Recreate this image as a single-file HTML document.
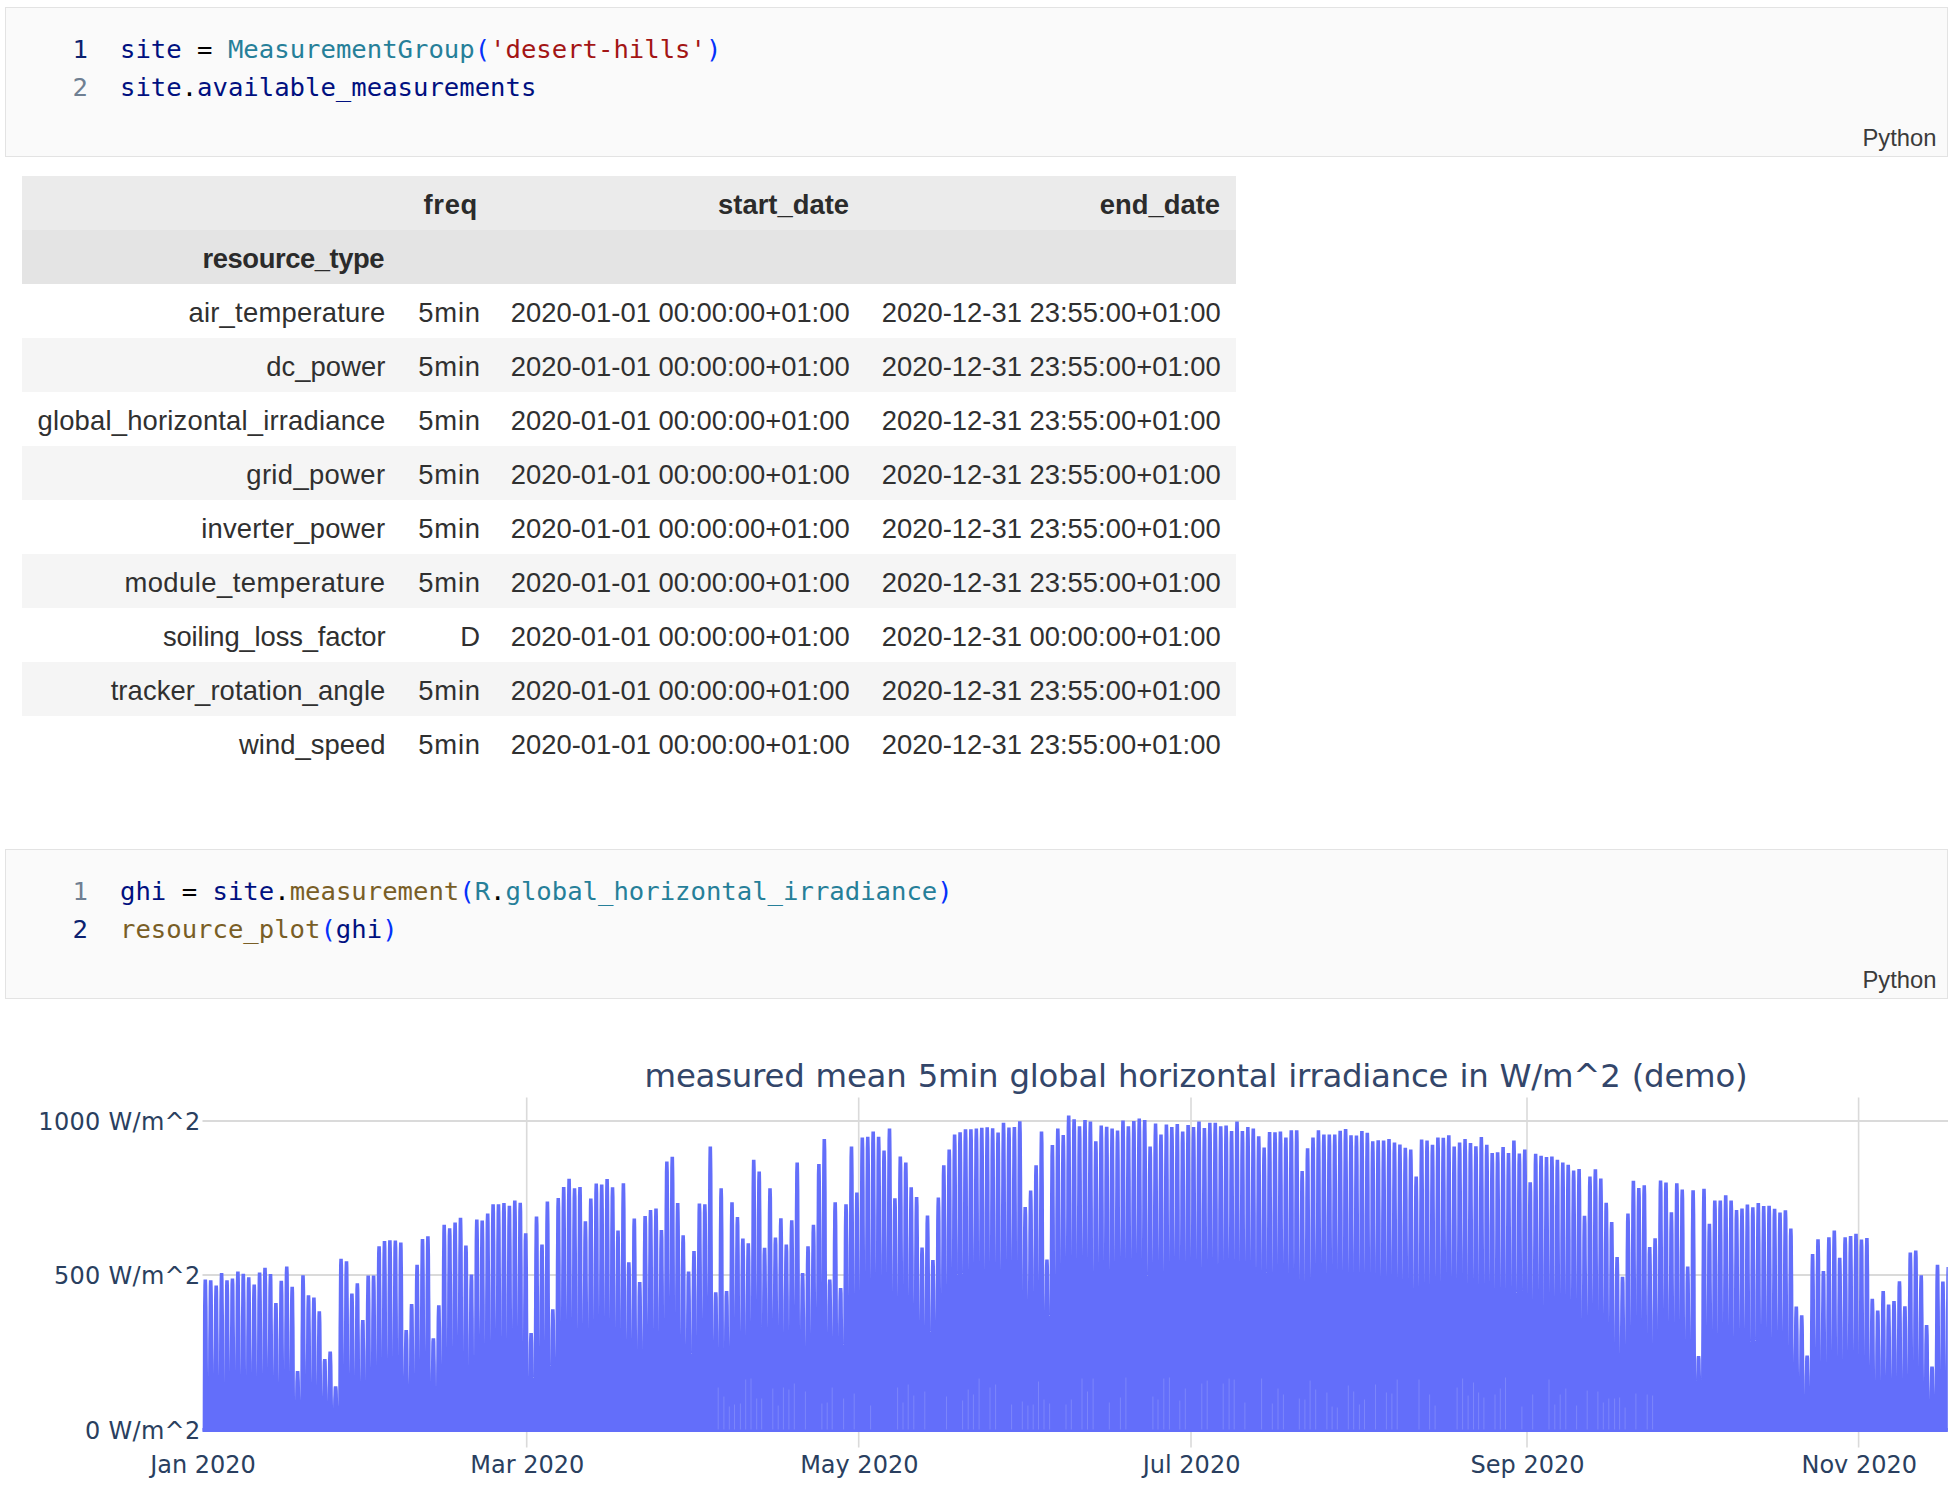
<!DOCTYPE html>
<html><head><meta charset="utf-8"><title>notebook</title>
<style>
html,body{margin:0;padding:0;background:#fff;}
body{width:1954px;height:1490px;position:relative;overflow:hidden;font-family:"Liberation Sans",sans-serif;}
.cell{position:absolute;left:5px;width:1941px;height:148px;background:#fafafa;border:1px solid #e3e3e3;}
.code{position:absolute;left:0;top:0;font-family:"DejaVu Sans Mono","Liberation Mono",monospace;font-size:25.62px;line-height:38px;white-space:pre;}
.ln{position:absolute;left:62px;width:20px;text-align:right;color:#6f7f92;}
.ln.act{color:#0b216f;}
.cl{position:absolute;left:114px;}
.v{color:#001080}.c{color:#267f99}.s{color:#a31515}.f{color:#795e26}.b{color:#0431fa}.k{color:#000}
.lang{position:absolute;right:10.5px;bottom:4px;font-size:23.8px;color:#3b3b3b;}
table{position:absolute;left:22px;top:176px;border-collapse:collapse;table-layout:fixed;width:1214px;font-size:27.4px;color:#303030;}
td,th{height:50px;padding:4px 16px 0 0;text-align:right;vertical-align:middle;white-space:nowrap;font-weight:normal;}
thead th{font-weight:bold;color:#2b2b2b}
th.rt{letter-spacing:-0.45px}th.fq{letter-spacing:0.7px}
tbody td:nth-child(1){padding-right:14.6px}tbody td:nth-child(2){letter-spacing:0.8px;padding-right:13.2px}tbody td:nth-child(3),tbody td:nth-child(4){padding-right:15.3px}
thead tr.h1{background:#ebebeb}
thead tr.h2{background:#e4e4e4}
tbody tr:nth-child(even){background:#f5f5f5}
</style></head><body>
<div class="cell" style="top:7px">
 <div class="code">
  <span class="ln act" style="top:21.8px">1</span><span class="ln" style="top:59.8px">2</span>
  <span class="cl" style="top:21.8px"><span class="v">site</span><span class="k"> = </span><span class="c">MeasurementGroup</span><span class="b">(</span><span class="s">'desert-hills'</span><span class="b">)</span></span>
  <span class="cl" style="top:59.8px"><span class="v">site</span><span class="k">.</span><span class="v">available_measurements</span></span>
 </div>
 <div class="lang">Python</div>
</div>
<table>
<colgroup><col style="width:378px"><col style="width:94px"><col style="width:371px"><col style="width:371px"></colgroup>
<thead>
<tr class="h1"><th></th><th class="fq">freq</th><th>start_date</th><th>end_date</th></tr>
<tr class="h2"><th class="rt">resource_type</th><th></th><th></th><th></th></tr>
</thead>
<tbody>
<tr><td style="letter-spacing:0.24px">air_temperature</td><td>5min</td><td>2020-01-01 00:00:00+01:00</td><td>2020-12-31 23:55:00+01:00</td></tr>
<tr><td style="letter-spacing:0.04px">dc_power</td><td>5min</td><td>2020-01-01 00:00:00+01:00</td><td>2020-12-31 23:55:00+01:00</td></tr>
<tr><td style="letter-spacing:0.19px">global_horizontal_irradiance</td><td>5min</td><td>2020-01-01 00:00:00+01:00</td><td>2020-12-31 23:55:00+01:00</td></tr>
<tr><td style="letter-spacing:0.36px">grid_power</td><td>5min</td><td>2020-01-01 00:00:00+01:00</td><td>2020-12-31 23:55:00+01:00</td></tr>
<tr><td style="letter-spacing:0.22px">inverter_power</td><td>5min</td><td>2020-01-01 00:00:00+01:00</td><td>2020-12-31 23:55:00+01:00</td></tr>
<tr><td style="letter-spacing:0.46px">module_temperature</td><td>5min</td><td>2020-01-01 00:00:00+01:00</td><td>2020-12-31 23:55:00+01:00</td></tr>
<tr><td style="letter-spacing:-0.15px">soiling_loss_factor</td><td>D</td><td>2020-01-01 00:00:00+01:00</td><td>2020-12-31 00:00:00+01:00</td></tr>
<tr><td style="letter-spacing:0.10px">tracker_rotation_angle</td><td>5min</td><td>2020-01-01 00:00:00+01:00</td><td>2020-12-31 23:55:00+01:00</td></tr>
<tr><td style="letter-spacing:0.02px">wind_speed</td><td>5min</td><td>2020-01-01 00:00:00+01:00</td><td>2020-12-31 23:55:00+01:00</td></tr>
</tbody></table>
<div class="cell" style="top:849px">
 <div class="code">
  <span class="ln" style="top:21.8px">1</span><span class="ln act" style="top:59.8px">2</span>
  <span class="cl" style="top:21.8px"><span class="v">ghi</span><span class="k"> = </span><span class="v">site</span><span class="k">.</span><span class="f">measurement</span><span class="b">(</span><span class="c">R</span><span class="k">.</span><span class="c">global_horizontal_irradiance</span><span class="b">)</span></span>
  <span class="cl" style="top:59.8px"><span class="f">resource_plot</span><span class="b">(</span><span class="v">ghi</span><span class="b">)</span></span>
 </div>
 <div class="lang">Python</div>
</div>
<svg width="1954" height="1490" viewBox="0 0 1954 1490" style="position:absolute;left:0;top:0" font-family="'DejaVu Sans',Verdana,sans-serif" fill="#2a3f5f">
<defs><clipPath id="pc"><rect x="202.5" y="1098" width="1745.3" height="336"/></clipPath></defs>
<line x1="526.7" x2="526.7" y1="1097.5" y2="1447.5" stroke="#dadada" stroke-width="1.6"/>
<line x1="858.7" x2="858.7" y1="1097.5" y2="1447.5" stroke="#dadada" stroke-width="1.6"/>
<line x1="1191.0" x2="1191.0" y1="1097.5" y2="1447.5" stroke="#dadada" stroke-width="1.6"/>
<line x1="1527.0" x2="1527.0" y1="1097.5" y2="1447.5" stroke="#dadada" stroke-width="1.6"/>
<line x1="1858.6" x2="1858.6" y1="1097.5" y2="1447.5" stroke="#dadada" stroke-width="1.6"/>
<line x1="202.5" x2="1948" y1="1121.0" y2="1121.0" stroke="#dadada" stroke-width="1.8"/>
<line x1="202.5" x2="1948" y1="1275.0" y2="1275.0" stroke="#dadada" stroke-width="1.8"/>
<line x1="202.5" x2="1948" y1="1430.5" y2="1430.5" stroke="#dadada" stroke-width="1.8"/>
<g clip-path="url(#pc)" fill="#636efa"><rect x="200" y="1428.0" width="1750" height="4"/><path d="M202.3,1430.5L202.4,1407.9L202.5,1385.2L202.7,1362.6L202.8,1340.0L202.9,1321.9L203.0,1306.8L203.2,1294.7L203.3,1285.6L203.5,1279.6L207.1,1279.6L207.3,1285.6L207.4,1294.7L207.6,1306.8L207.7,1321.9L207.8,1340.0L207.9,1362.6L208.1,1385.2L208.2,1407.9L208.3,1430.5ZM207.7,1430.5L207.9,1408.0L208.0,1385.4L208.1,1362.9L208.2,1340.4L208.4,1322.4L208.5,1307.3L208.6,1295.3L208.7,1286.3L208.9,1280.3L212.5,1280.3L212.7,1286.3L212.9,1295.3L213.0,1307.3L213.1,1322.4L213.2,1340.4L213.4,1362.9L213.5,1385.4L213.6,1408.0L213.7,1430.5ZM213.2,1430.5L213.3,1408.7L213.4,1387.0L213.5,1365.2L213.7,1343.4L213.8,1326.0L213.9,1311.5L214.0,1299.9L214.2,1291.2L214.4,1285.4L218.0,1285.4L218.2,1291.2L218.3,1299.9L218.4,1311.5L218.5,1326.0L218.7,1343.4L218.8,1365.2L218.9,1387.0L219.0,1408.7L219.2,1430.5ZM218.6,1430.5L218.7,1406.9L218.8,1383.2L219.0,1359.6L219.1,1335.9L219.2,1317.0L219.3,1301.3L219.5,1288.7L219.6,1279.2L219.8,1272.9L223.4,1272.9L223.6,1279.2L223.7,1288.7L223.8,1301.3L224.0,1317.0L224.1,1335.9L224.2,1359.6L224.3,1383.2L224.5,1406.9L224.6,1430.5ZM224.0,1430.5L224.1,1408.0L224.3,1385.4L224.4,1362.9L224.5,1340.4L224.6,1322.4L224.8,1307.3L224.9,1295.3L225.0,1286.3L225.2,1280.3L228.8,1280.3L229.0,1286.3L229.2,1295.3L229.3,1307.3L229.4,1322.4L229.5,1340.4L229.7,1362.9L229.8,1385.4L229.9,1408.0L230.0,1430.5ZM229.5,1430.5L229.6,1407.7L229.7,1384.9L229.8,1362.1L229.9,1339.2L230.1,1321.0L230.2,1305.8L230.3,1293.6L230.4,1284.5L230.7,1278.4L234.2,1278.4L234.5,1284.5L234.6,1293.6L234.7,1305.8L234.8,1321.0L235.0,1339.2L235.1,1362.1L235.2,1384.9L235.3,1407.7L235.4,1430.5ZM234.9,1430.5L235.0,1406.7L235.1,1382.8L235.2,1359.0L235.4,1335.1L235.5,1316.0L235.6,1300.1L235.7,1287.4L235.9,1277.9L236.1,1271.5L239.7,1271.5L239.9,1277.9L240.0,1287.4L240.1,1300.1L240.3,1316.0L240.4,1335.1L240.5,1359.0L240.6,1382.8L240.8,1406.7L240.9,1430.5ZM240.3,1430.5L240.4,1407.0L240.5,1383.5L240.7,1360.0L240.8,1336.5L240.9,1317.7L241.1,1302.0L241.2,1289.5L241.3,1280.1L241.5,1273.8L245.1,1273.8L245.3,1280.1L245.4,1289.5L245.6,1302.0L245.7,1317.7L245.8,1336.5L245.9,1360.0L246.1,1383.5L246.2,1407.0L246.3,1430.5ZM245.7,1430.5L245.9,1407.5L246.0,1384.5L246.1,1361.6L246.2,1338.6L246.4,1320.2L246.5,1304.9L246.6,1292.6L246.7,1283.4L247.0,1277.3L250.5,1277.3L250.7,1283.4L250.9,1292.6L251.0,1304.9L251.1,1320.2L251.2,1338.6L251.4,1361.6L251.5,1384.5L251.6,1407.5L251.7,1430.5ZM251.2,1430.5L251.3,1408.6L251.4,1386.7L251.5,1364.8L251.7,1342.8L251.8,1325.3L251.9,1310.7L252.0,1299.0L252.2,1290.2L252.4,1284.4L256.0,1284.4L256.2,1290.2L256.3,1299.0L256.4,1310.7L256.5,1325.3L256.7,1342.8L256.8,1364.8L256.9,1386.7L257.1,1408.6L257.2,1430.5ZM256.6,1430.5L256.7,1406.8L256.8,1383.1L257.0,1359.4L257.1,1335.6L257.2,1316.7L257.3,1300.9L257.5,1288.2L257.6,1278.7L257.8,1272.4L261.4,1272.4L261.6,1278.7L261.7,1288.2L261.9,1300.9L262.0,1316.7L262.1,1335.6L262.2,1359.4L262.4,1383.1L262.5,1406.8L262.6,1430.5ZM262.0,1430.5L262.1,1406.1L262.3,1381.7L262.4,1357.3L262.5,1332.9L262.7,1313.4L262.8,1297.1L262.9,1284.1L263.0,1274.3L263.2,1267.8L266.8,1267.8L267.0,1274.3L267.2,1284.1L267.3,1297.1L267.4,1313.4L267.5,1332.9L267.7,1357.3L267.8,1381.7L267.9,1406.1L268.0,1430.5ZM267.5,1430.5L267.6,1407.0L267.7,1383.5L267.8,1360.1L268.0,1336.6L268.1,1317.8L268.2,1302.2L268.3,1289.7L268.5,1280.3L268.7,1274.0L272.3,1274.0L272.5,1280.3L272.6,1289.7L272.7,1302.2L272.8,1317.8L273.0,1336.6L273.1,1360.1L273.2,1383.5L273.3,1407.0L273.5,1430.5ZM272.9,1430.5L273.0,1411.4L273.1,1392.2L273.2,1373.1L273.4,1354.0L273.5,1338.7L273.6,1326.0L273.8,1315.8L273.9,1308.1L274.1,1303.0L277.7,1303.0L277.9,1308.1L278.0,1315.8L278.1,1326.0L278.3,1338.7L278.4,1354.0L278.5,1373.1L278.7,1392.2L278.8,1411.4L278.9,1430.5ZM278.3,1430.5L278.4,1408.0L278.6,1385.6L278.7,1363.1L278.8,1340.6L278.9,1322.6L279.1,1307.7L279.2,1295.7L279.3,1286.7L279.5,1280.7L283.1,1280.7L283.3,1286.7L283.5,1295.7L283.6,1307.7L283.7,1322.6L283.8,1340.6L284.0,1363.1L284.1,1385.6L284.2,1408.0L284.3,1430.5ZM283.7,1430.5L283.9,1405.9L284.0,1381.3L284.1,1356.7L284.2,1332.0L284.4,1312.3L284.5,1295.9L284.6,1282.8L284.7,1273.0L285.0,1266.4L288.5,1266.4L288.8,1273.0L288.9,1282.8L289.0,1295.9L289.1,1312.3L289.3,1332.0L289.4,1356.7L289.5,1381.3L289.6,1405.9L289.8,1430.5ZM289.2,1430.5L289.3,1408.9L289.4,1387.4L289.5,1365.8L289.7,1344.2L289.8,1327.0L289.9,1312.6L290.0,1301.1L290.2,1292.5L290.4,1286.7L294.0,1286.7L294.2,1292.5L294.3,1301.1L294.4,1312.6L294.6,1327.0L294.7,1344.2L294.8,1365.8L294.9,1387.4L295.1,1408.9L295.2,1430.5ZM294.6,1430.5L294.7,1421.6L294.8,1412.7L295.0,1403.7L295.1,1394.8L295.2,1387.7L295.3,1381.7L295.5,1377.0L295.6,1373.4L295.8,1371.0L299.4,1371.0L299.6,1373.4L299.7,1377.0L299.9,1381.7L300.0,1387.7L300.1,1394.8L300.3,1403.7L300.4,1412.7L300.5,1421.6L300.6,1430.5ZM300.0,1430.5L300.2,1407.2L300.3,1383.9L300.4,1360.6L300.5,1337.3L300.7,1318.7L300.8,1303.2L300.9,1290.7L301.0,1281.4L301.2,1275.2L304.8,1275.2L305.0,1281.4L305.2,1290.7L305.3,1303.2L305.4,1318.7L305.5,1337.3L305.7,1360.6L305.8,1383.9L305.9,1407.2L306.0,1430.5ZM305.5,1430.5L305.6,1410.2L305.7,1389.9L305.8,1369.7L306.0,1349.4L306.1,1333.2L306.2,1319.6L306.3,1308.8L306.5,1300.7L306.7,1295.3L310.3,1295.3L310.5,1300.7L310.6,1308.8L310.7,1319.6L310.9,1333.2L311.0,1349.4L311.1,1369.7L311.2,1389.9L311.4,1410.2L311.5,1430.5ZM310.9,1430.5L311.0,1410.6L311.1,1390.6L311.3,1370.7L311.4,1350.8L311.5,1334.8L311.6,1321.5L311.8,1310.9L311.9,1302.9L312.1,1297.6L315.7,1297.6L315.9,1302.9L316.0,1310.9L316.2,1321.5L316.3,1334.8L316.4,1350.8L316.5,1370.7L316.7,1390.6L316.8,1410.6L316.9,1430.5ZM316.3,1430.5L316.4,1412.6L316.6,1394.7L316.7,1376.9L316.8,1359.0L316.9,1344.7L317.1,1332.8L317.2,1323.2L317.3,1316.1L317.5,1311.3L321.1,1311.3L321.3,1316.1L321.5,1323.2L321.6,1332.8L321.7,1344.7L321.8,1359.0L322.0,1376.9L322.1,1394.7L322.2,1412.6L322.3,1430.5ZM321.8,1430.5L321.9,1419.8L322.0,1409.0L322.1,1398.3L322.3,1387.6L322.4,1379.0L322.5,1371.9L322.6,1366.2L322.7,1361.9L323.0,1359.0L326.6,1359.0L326.8,1361.9L326.9,1366.2L327.0,1371.9L327.1,1379.0L327.3,1387.6L327.4,1398.3L327.5,1409.0L327.7,1419.8L327.8,1430.5ZM327.2,1430.5L327.3,1418.6L327.4,1406.8L327.5,1394.9L327.7,1383.0L327.8,1373.5L327.9,1365.6L328.0,1359.3L328.2,1354.6L328.4,1351.4L332.0,1351.4L332.2,1354.6L332.3,1359.3L332.5,1365.6L332.6,1373.5L332.7,1383.0L332.8,1394.9L333.0,1406.8L333.1,1418.6L333.2,1430.5ZM332.6,1430.5L332.7,1423.9L332.8,1417.2L333.0,1410.6L333.1,1404.0L333.2,1398.7L333.4,1394.3L333.5,1390.7L333.6,1388.1L333.8,1386.3L337.4,1386.3L337.6,1388.1L337.8,1390.7L337.9,1394.3L338.0,1398.7L338.1,1404.0L338.3,1410.6L338.4,1417.2L338.5,1423.9L338.6,1430.5ZM338.0,1430.5L338.2,1404.7L338.3,1379.0L338.4,1353.2L338.5,1327.4L338.7,1306.8L338.8,1289.6L338.9,1275.9L339.0,1265.6L339.3,1258.7L342.8,1258.7L343.1,1265.6L343.2,1275.9L343.3,1289.6L343.4,1306.8L343.6,1327.4L343.7,1353.2L343.8,1379.0L343.9,1404.7L344.1,1430.5ZM343.5,1430.5L343.6,1405.1L343.7,1379.7L343.8,1354.4L344.0,1329.0L344.1,1308.7L344.2,1291.8L344.3,1278.2L344.5,1268.1L344.7,1261.3L348.3,1261.3L348.5,1268.1L348.6,1278.2L348.7,1291.8L348.9,1308.7L349.0,1329.0L349.1,1354.4L349.3,1379.7L349.4,1405.1L349.5,1430.5ZM348.9,1430.5L349.0,1410.0L349.1,1389.4L349.3,1368.8L349.4,1348.3L349.5,1331.9L349.6,1318.2L349.8,1307.2L349.9,1299.0L350.1,1293.5L353.7,1293.5L353.9,1299.0L354.1,1307.2L354.2,1318.2L354.3,1331.9L354.4,1348.3L354.6,1368.8L354.7,1389.4L354.8,1410.0L354.9,1430.5ZM354.3,1430.5L354.4,1408.4L354.6,1386.3L354.7,1364.3L354.8,1342.2L355.0,1324.5L355.1,1309.8L355.2,1298.0L355.3,1289.2L355.6,1283.3L359.1,1283.3L359.4,1289.2L359.5,1298.0L359.6,1309.8L359.7,1324.5L359.9,1342.2L360.0,1364.3L360.1,1386.3L360.2,1408.4L360.4,1430.5ZM359.8,1430.5L359.9,1413.9L360.0,1397.4L360.1,1380.8L360.3,1364.3L360.4,1351.0L360.5,1340.0L360.6,1331.1L360.8,1324.5L361.0,1320.1L364.6,1320.1L364.8,1324.5L364.9,1331.1L365.0,1340.0L365.2,1351.0L365.3,1364.3L365.4,1380.8L365.6,1397.4L365.7,1413.9L365.8,1430.5ZM365.2,1430.5L365.3,1407.3L365.4,1384.0L365.5,1360.8L365.7,1337.6L365.8,1319.0L365.9,1303.5L366.1,1291.1L366.2,1281.8L366.4,1275.6L370.0,1275.6L370.2,1281.8L370.3,1291.1L370.5,1303.5L370.6,1319.0L370.7,1337.6L370.9,1360.8L371.0,1384.0L371.1,1407.3L371.2,1430.5ZM370.6,1430.5L370.7,1407.3L370.8,1384.0L371.0,1360.8L371.1,1337.6L371.2,1319.0L371.4,1303.5L371.5,1291.1L371.6,1281.8L371.8,1275.6L375.4,1275.6L375.6,1281.8L375.8,1291.1L375.9,1303.5L376.0,1319.0L376.1,1337.6L376.3,1360.8L376.4,1384.0L376.5,1407.3L376.7,1430.5ZM376.0,1430.5L376.2,1402.9L376.3,1375.2L376.4,1347.6L376.5,1319.9L376.7,1297.8L376.8,1279.4L376.9,1264.6L377.0,1253.6L377.3,1246.2L380.9,1246.2L381.1,1253.6L381.2,1264.6L381.3,1279.4L381.5,1297.8L381.6,1319.9L381.7,1347.6L381.8,1375.2L382.0,1402.9L382.1,1430.5ZM381.5,1430.5L381.6,1402.1L381.7,1373.6L381.8,1345.2L382.0,1316.7L382.1,1294.0L382.2,1275.0L382.3,1259.9L382.5,1248.5L382.7,1240.9L386.3,1240.9L386.5,1248.5L386.6,1259.9L386.8,1275.0L386.9,1294.0L387.0,1316.7L387.1,1345.2L387.3,1373.6L387.4,1402.1L387.5,1430.5ZM386.9,1430.5L387.0,1402.0L387.1,1373.4L387.3,1344.9L387.4,1316.3L387.5,1293.5L387.7,1274.5L387.8,1259.2L387.9,1247.8L388.1,1240.2L391.7,1240.2L391.9,1247.8L392.1,1259.2L392.2,1274.5L392.3,1293.5L392.4,1316.3L392.6,1344.9L392.7,1373.4L392.8,1402.0L392.9,1430.5ZM392.3,1430.5L392.4,1402.0L392.6,1373.5L392.7,1345.0L392.8,1316.4L393.0,1293.6L393.1,1274.6L393.2,1259.4L393.3,1248.0L393.6,1240.4L397.1,1240.4L397.4,1248.0L397.5,1259.4L397.6,1274.6L397.7,1293.6L397.9,1316.4L398.0,1345.0L398.1,1373.5L398.3,1402.0L398.4,1430.5ZM397.8,1430.5L397.9,1402.3L398.0,1374.1L398.1,1345.9L398.3,1317.7L398.4,1295.1L398.5,1276.3L398.6,1261.3L398.8,1250.0L399.0,1242.5L402.6,1242.5L402.8,1250.0L402.9,1261.3L403.1,1276.3L403.2,1295.1L403.3,1317.7L403.4,1345.9L403.6,1374.1L403.7,1402.3L403.8,1430.5ZM403.2,1430.5L403.3,1415.4L403.4,1400.4L403.5,1385.3L403.7,1370.3L403.8,1358.2L403.9,1348.2L404.1,1340.1L404.2,1334.1L404.4,1330.1L408.0,1330.1L408.2,1334.1L408.4,1340.1L408.5,1348.2L408.6,1358.2L408.7,1370.3L408.9,1385.3L409.0,1400.4L409.1,1415.4L409.2,1430.5ZM408.6,1430.5L408.7,1411.5L408.8,1392.6L409.0,1373.6L409.1,1354.7L409.2,1339.5L409.4,1326.9L409.5,1316.7L409.6,1309.2L409.8,1304.1L413.4,1304.1L413.7,1309.2L413.8,1316.7L413.9,1326.9L414.0,1339.5L414.2,1354.7L414.3,1373.6L414.4,1392.6L414.6,1411.5L414.7,1430.5ZM414.0,1430.5L414.2,1405.6L414.3,1380.8L414.4,1355.9L414.5,1331.0L414.7,1311.1L414.8,1294.5L414.9,1281.3L415.1,1271.3L415.3,1264.7L418.9,1264.7L419.1,1271.3L419.2,1281.3L419.3,1294.5L419.5,1311.1L419.6,1331.0L419.7,1355.9L419.9,1380.8L420.0,1405.6L420.1,1430.5ZM419.5,1430.5L419.6,1401.8L419.7,1373.0L419.8,1344.3L420.0,1315.6L420.1,1292.6L420.2,1273.5L420.4,1258.2L420.5,1246.7L420.7,1239.0L424.3,1239.0L424.5,1246.7L424.6,1258.2L424.8,1273.5L424.9,1292.6L425.0,1315.6L425.2,1344.3L425.3,1373.0L425.4,1401.8L425.5,1430.5ZM424.9,1430.5L425.0,1401.4L425.1,1372.2L425.3,1343.1L425.4,1314.0L425.5,1290.7L425.7,1271.3L425.8,1255.7L425.9,1244.1L426.1,1236.3L429.7,1236.3L429.9,1244.1L430.1,1255.7L430.2,1271.3L430.3,1290.7L430.5,1314.0L430.6,1343.1L430.7,1372.2L430.8,1401.4L431.0,1430.5ZM430.3,1430.5L430.4,1416.7L430.6,1402.8L430.7,1389.0L430.8,1375.1L431.0,1364.0L431.1,1354.8L431.2,1347.4L431.3,1341.9L431.6,1338.2L435.2,1338.2L435.4,1341.9L435.5,1347.4L435.6,1354.8L435.8,1364.0L435.9,1375.1L436.0,1389.0L436.2,1402.8L436.3,1416.7L436.4,1430.5ZM435.7,1430.5L435.9,1411.7L436.0,1392.9L436.1,1374.2L436.3,1355.4L436.4,1340.4L436.5,1327.8L436.6,1317.8L436.8,1310.3L437.0,1305.3L440.6,1305.3L440.8,1310.3L440.9,1317.8L441.1,1327.8L441.2,1340.4L441.3,1355.4L441.5,1374.2L441.6,1392.9L441.7,1411.7L441.8,1430.5ZM441.2,1430.5L441.3,1399.6L441.4,1368.8L441.5,1337.9L441.7,1307.0L441.8,1282.3L441.9,1261.7L442.1,1245.3L442.2,1232.9L442.4,1224.7L446.0,1224.7L446.2,1232.9L446.4,1245.3L446.5,1261.7L446.6,1282.3L446.7,1307.0L446.9,1337.9L447.0,1368.8L447.1,1399.6L447.3,1430.5ZM446.6,1430.5L446.7,1400.2L446.8,1369.8L447.0,1339.5L447.1,1309.1L447.2,1284.8L447.4,1264.6L447.5,1248.4L447.6,1236.3L447.9,1228.2L451.4,1228.2L451.7,1236.3L451.8,1248.4L451.9,1264.6L452.1,1284.8L452.2,1309.1L452.3,1339.5L452.5,1369.8L452.6,1400.2L452.7,1430.5ZM452.0,1430.5L452.2,1399.3L452.3,1368.1L452.4,1336.9L452.5,1305.6L452.7,1280.7L452.8,1259.9L452.9,1243.2L453.1,1230.7L453.3,1222.4L456.9,1222.4L457.1,1230.7L457.2,1243.2L457.4,1259.9L457.5,1280.7L457.6,1305.6L457.8,1336.9L457.9,1368.1L458.0,1399.3L458.1,1430.5ZM457.5,1430.5L457.6,1398.6L457.7,1366.7L457.8,1334.7L458.0,1302.8L458.1,1277.3L458.2,1256.0L458.4,1239.0L458.5,1226.2L458.7,1217.7L462.3,1217.7L462.5,1226.2L462.7,1239.0L462.8,1256.0L462.9,1277.3L463.0,1302.8L463.2,1334.7L463.3,1366.7L463.4,1398.6L463.6,1430.5ZM462.9,1430.5L463.0,1402.8L463.1,1375.0L463.3,1347.2L463.4,1319.5L463.5,1297.3L463.7,1278.8L463.8,1264.0L463.9,1252.9L464.1,1245.5L467.7,1245.5L468.0,1252.9L468.1,1264.0L468.2,1278.8L468.3,1297.3L468.5,1319.5L468.6,1347.2L468.7,1375.0L468.9,1402.8L469.0,1430.5ZM468.3,1430.5L468.4,1407.1L468.6,1383.7L468.7,1360.3L468.8,1336.9L469.0,1318.2L469.1,1302.6L469.2,1290.1L469.4,1280.7L469.6,1274.5L473.2,1274.5L473.4,1280.7L473.5,1290.1L473.6,1302.6L473.8,1318.2L473.9,1336.9L474.0,1360.3L474.2,1383.7L474.3,1407.1L474.4,1430.5ZM473.7,1430.5L473.9,1398.8L474.0,1367.2L474.1,1335.5L474.3,1303.8L474.4,1278.5L474.5,1257.4L474.6,1240.5L474.8,1227.8L475.0,1219.4L478.6,1219.4L478.8,1227.8L479.0,1240.5L479.1,1257.4L479.2,1278.5L479.3,1303.8L479.5,1335.5L479.6,1367.2L479.7,1398.8L479.9,1430.5ZM479.2,1430.5L479.3,1399.0L479.4,1367.5L479.5,1336.0L479.7,1304.5L479.8,1279.3L479.9,1258.3L480.1,1241.5L480.2,1228.9L480.4,1220.5L484.0,1220.5L484.2,1228.9L484.4,1241.5L484.5,1258.3L484.6,1279.3L484.8,1304.5L484.9,1336.0L485.0,1367.5L485.2,1399.0L485.3,1430.5ZM484.6,1430.5L484.7,1398.0L484.8,1365.4L485.0,1332.9L485.1,1300.4L485.3,1274.3L485.4,1252.6L485.5,1235.3L485.6,1222.3L485.9,1213.6L489.5,1213.6L489.7,1222.3L489.8,1235.3L489.9,1252.6L490.1,1274.3L490.2,1300.4L490.3,1332.9L490.5,1365.4L490.6,1398.0L490.7,1430.5ZM490.0,1430.5L490.2,1396.6L490.3,1362.6L490.4,1328.7L490.5,1294.8L490.7,1267.6L490.8,1245.0L490.9,1226.9L491.1,1213.3L491.3,1204.3L494.9,1204.3L495.1,1213.3L495.2,1226.9L495.4,1245.0L495.5,1267.6L495.6,1294.8L495.8,1328.7L495.9,1362.6L496.0,1396.6L496.2,1430.5ZM495.5,1430.5L495.6,1396.6L495.7,1362.6L495.8,1328.7L496.0,1294.8L496.1,1267.6L496.2,1245.0L496.4,1226.9L496.5,1213.3L496.7,1204.3L500.3,1204.3L500.5,1213.3L500.7,1226.9L500.8,1245.0L500.9,1267.6L501.1,1294.8L501.2,1328.7L501.3,1362.6L501.5,1396.6L501.6,1430.5ZM500.9,1430.5L501.0,1396.4L501.1,1362.3L501.3,1328.2L501.4,1294.1L501.5,1266.8L501.7,1244.0L501.8,1225.8L501.9,1212.2L502.2,1203.1L505.7,1203.1L506.0,1212.2L506.1,1225.8L506.2,1244.0L506.4,1266.8L506.5,1294.1L506.6,1328.2L506.8,1362.3L506.9,1396.4L507.0,1430.5ZM506.3,1430.5L506.4,1396.8L506.6,1363.1L506.7,1329.3L506.8,1295.6L507.0,1268.6L507.1,1246.2L507.2,1228.2L507.4,1214.7L507.6,1205.7L511.2,1205.7L511.4,1214.7L511.5,1228.2L511.7,1246.2L511.8,1268.6L511.9,1295.6L512.1,1329.3L512.2,1363.1L512.3,1396.8L512.4,1430.5ZM511.7,1430.5L511.9,1396.0L512.0,1361.5L512.1,1327.0L512.3,1292.4L512.4,1264.8L512.5,1241.8L512.7,1223.4L512.8,1209.6L513.0,1200.4L516.6,1200.4L516.8,1209.6L517.0,1223.4L517.1,1241.8L517.2,1264.8L517.4,1292.4L517.5,1327.0L517.6,1361.5L517.8,1396.0L517.9,1430.5ZM517.2,1430.5L517.3,1396.3L517.4,1362.2L517.5,1328.0L517.7,1293.8L517.8,1266.5L518.0,1243.7L518.1,1225.5L518.2,1211.8L518.5,1202.7L522.0,1202.7L522.3,1211.8L522.4,1225.5L522.5,1243.7L522.7,1266.5L522.8,1293.8L522.9,1328.0L523.1,1362.2L523.2,1396.3L523.3,1430.5ZM522.6,1430.5L522.7,1400.9L522.8,1371.3L523.0,1341.8L523.1,1312.2L523.3,1288.5L523.4,1268.8L523.5,1253.0L523.6,1241.2L523.9,1233.3L527.5,1233.3L527.7,1241.2L527.8,1253.0L528.0,1268.8L528.1,1288.5L528.2,1312.2L528.4,1341.8L528.5,1371.3L528.6,1400.9L528.7,1430.5ZM528.0,1430.5L528.1,1415.9L528.3,1401.3L528.4,1386.7L528.6,1372.1L528.7,1360.4L528.8,1350.6L528.9,1342.8L529.1,1337.0L529.3,1333.1L532.9,1333.1L533.1,1337.0L533.3,1342.8L533.4,1350.6L533.5,1360.4L533.6,1372.1L533.8,1386.7L533.9,1401.3L534.1,1415.9L534.2,1430.5ZM533.5,1430.5L533.6,1398.4L533.7,1366.3L533.8,1334.2L534.0,1302.2L534.1,1276.5L534.2,1255.1L534.4,1238.0L534.5,1225.2L534.7,1216.6L538.3,1216.6L538.6,1225.2L538.7,1238.0L538.8,1255.1L538.9,1276.5L539.1,1302.2L539.2,1334.2L539.4,1366.3L539.5,1398.4L539.6,1430.5ZM538.9,1430.5L539.0,1402.6L539.1,1374.7L539.3,1346.8L539.4,1318.8L539.5,1296.5L539.7,1277.9L539.8,1263.0L539.9,1251.8L540.2,1244.4L543.8,1244.4L544.0,1251.8L544.1,1263.0L544.3,1277.9L544.4,1296.5L544.5,1318.8L544.7,1346.8L544.8,1374.7L544.9,1402.6L545.0,1430.5ZM544.3,1430.5L544.4,1396.2L544.6,1361.8L544.7,1327.5L544.8,1293.1L545.0,1265.6L545.1,1242.7L545.2,1224.4L545.4,1210.7L545.6,1201.5L549.2,1201.5L549.4,1210.7L549.6,1224.4L549.7,1242.7L549.8,1265.6L549.9,1293.1L550.1,1327.5L550.2,1361.8L550.3,1396.2L550.5,1430.5ZM549.7,1430.5L549.9,1412.3L550.0,1394.1L550.1,1375.9L550.3,1357.7L550.4,1343.2L550.5,1331.0L550.7,1321.3L550.8,1314.1L551.0,1309.2L554.6,1309.2L554.8,1314.1L555.0,1321.3L555.1,1331.0L555.2,1343.2L555.4,1357.7L555.5,1375.9L555.7,1394.1L555.8,1412.3L555.9,1430.5ZM555.2,1430.5L555.3,1395.6L555.4,1360.8L555.5,1325.9L555.7,1291.1L555.8,1263.2L556.0,1239.9L556.1,1221.3L556.2,1207.4L556.5,1198.1L560.0,1198.1L560.3,1207.4L560.4,1221.3L560.5,1239.9L560.7,1263.2L560.8,1291.1L561.0,1325.9L561.1,1360.8L561.2,1395.6L561.3,1430.5ZM560.6,1430.5L560.7,1394.0L560.8,1357.4L561.0,1320.9L561.1,1284.3L561.3,1255.1L561.4,1230.7L561.5,1211.3L561.7,1196.6L561.9,1186.9L565.5,1186.9L565.7,1196.6L565.8,1211.3L566.0,1230.7L566.1,1255.1L566.2,1284.3L566.4,1320.9L566.5,1357.4L566.6,1394.0L566.8,1430.5ZM566.0,1430.5L566.1,1392.7L566.3,1355.0L566.4,1317.2L566.6,1279.5L566.7,1249.3L566.8,1224.1L566.9,1204.0L567.1,1188.9L567.3,1178.8L570.9,1178.8L571.1,1188.9L571.3,1204.0L571.4,1224.1L571.5,1249.3L571.7,1279.5L571.8,1317.2L571.9,1355.0L572.1,1392.7L572.2,1430.5ZM571.4,1430.5L571.6,1394.2L571.7,1357.8L571.8,1321.5L572.0,1285.2L572.1,1256.1L572.2,1231.9L572.4,1212.5L572.5,1198.0L572.8,1188.3L576.3,1188.3L576.6,1198.0L576.7,1212.5L576.8,1231.9L577.0,1256.1L577.1,1285.2L577.2,1321.5L577.4,1357.8L577.5,1394.2L577.6,1430.5ZM576.9,1430.5L577.0,1394.0L577.1,1357.4L577.3,1320.9L577.4,1284.3L577.5,1255.1L577.7,1230.7L577.8,1211.3L577.9,1196.6L578.2,1186.9L581.8,1186.9L582.0,1196.6L582.1,1211.3L582.3,1230.7L582.4,1255.1L582.5,1284.3L582.7,1320.9L582.8,1357.4L582.9,1394.0L583.1,1430.5ZM582.3,1430.5L582.4,1399.1L582.6,1367.7L582.7,1336.3L582.8,1304.9L583.0,1279.8L583.1,1258.9L583.2,1242.1L583.4,1229.6L583.6,1221.2L587.2,1221.2L587.4,1229.6L587.6,1242.1L587.7,1258.9L587.8,1279.8L588.0,1304.9L588.1,1336.3L588.2,1367.7L588.4,1399.1L588.5,1430.5ZM587.7,1430.5L587.9,1395.7L588.0,1360.9L588.1,1326.1L588.3,1291.3L588.4,1263.5L588.5,1240.3L588.7,1221.7L588.8,1207.8L589.0,1198.5L592.6,1198.5L592.9,1207.8L593.0,1221.7L593.1,1240.3L593.3,1263.5L593.4,1291.3L593.5,1326.1L593.7,1360.9L593.8,1395.7L593.9,1430.5ZM593.2,1430.5L593.3,1393.5L593.4,1356.4L593.5,1319.3L593.7,1282.3L593.8,1252.7L594.0,1228.0L594.1,1208.2L594.2,1193.4L594.5,1183.5L598.0,1183.5L598.3,1193.4L598.4,1208.2L598.6,1228.0L598.7,1252.7L598.8,1282.3L599.0,1319.3L599.1,1356.4L599.2,1393.5L599.4,1430.5ZM598.6,1430.5L598.7,1393.6L598.8,1356.7L599.0,1319.8L599.1,1282.8L599.3,1253.3L599.4,1228.7L599.5,1209.0L599.7,1194.2L599.9,1184.4L603.5,1184.4L603.7,1194.2L603.9,1209.0L604.0,1228.7L604.1,1253.3L604.3,1282.8L604.4,1319.8L604.5,1356.7L604.7,1393.6L604.8,1430.5ZM604.0,1430.5L604.1,1392.8L604.3,1355.1L604.4,1317.4L604.6,1279.7L604.7,1249.5L604.8,1224.4L605.0,1204.2L605.1,1189.2L605.3,1179.1L608.9,1179.1L609.1,1189.2L609.3,1204.2L609.4,1224.4L609.6,1249.5L609.7,1279.7L609.8,1317.4L610.0,1355.1L610.1,1392.8L610.2,1430.5ZM609.4,1430.5L609.6,1394.0L609.7,1357.5L609.8,1321.0L610.0,1284.5L610.1,1255.3L610.2,1231.0L610.4,1211.5L610.5,1196.9L610.8,1187.2L614.3,1187.2L614.6,1196.9L614.7,1211.5L614.9,1231.0L615.0,1255.3L615.1,1284.5L615.3,1321.0L615.4,1357.5L615.5,1394.0L615.7,1430.5ZM614.9,1430.5L615.0,1400.5L615.1,1370.5L615.3,1340.5L615.4,1310.5L615.5,1286.5L615.7,1266.5L615.8,1250.5L616.0,1238.5L616.2,1230.5L619.8,1230.5L620.0,1238.5L620.1,1250.5L620.3,1266.5L620.4,1286.5L620.6,1310.5L620.7,1340.5L620.8,1370.5L621.0,1400.5L621.1,1430.5ZM620.3,1430.5L620.4,1393.4L620.6,1356.3L620.7,1319.2L620.8,1282.1L621.0,1252.4L621.1,1227.7L621.2,1207.9L621.4,1193.1L621.6,1183.2L625.2,1183.2L625.4,1193.1L625.6,1207.9L625.7,1227.7L625.8,1252.4L626.0,1282.1L626.1,1319.2L626.3,1356.3L626.4,1393.4L626.5,1430.5ZM625.7,1430.5L625.9,1405.3L626.0,1380.0L626.1,1354.8L626.3,1329.5L626.4,1309.3L626.5,1292.5L626.7,1279.0L626.8,1268.9L627.0,1262.2L630.6,1262.2L630.9,1268.9L631.0,1279.0L631.1,1292.5L631.3,1309.3L631.4,1329.5L631.6,1354.8L631.7,1380.0L631.8,1405.3L632.0,1430.5ZM631.2,1430.5L631.3,1398.7L631.4,1366.9L631.5,1335.1L631.7,1303.2L631.8,1277.8L632.0,1256.6L632.1,1239.6L632.2,1226.9L632.5,1218.4L636.1,1218.4L636.3,1226.9L636.4,1239.6L636.6,1256.6L636.7,1277.8L636.8,1303.2L637.0,1335.1L637.1,1366.9L637.3,1398.7L637.4,1430.5ZM636.6,1430.5L636.7,1408.2L636.8,1386.0L637.0,1363.7L637.1,1341.5L637.3,1323.7L637.4,1308.8L637.5,1296.9L637.7,1288.0L637.9,1282.1L641.5,1282.1L641.7,1288.0L641.9,1296.9L642.0,1308.8L642.1,1323.7L642.3,1341.5L642.4,1363.7L642.6,1386.0L642.7,1408.2L642.8,1430.5ZM642.0,1430.5L642.1,1398.3L642.3,1366.2L642.4,1334.0L642.6,1301.9L642.7,1276.1L642.8,1254.7L643.0,1237.5L643.1,1224.7L643.3,1216.1L646.9,1216.1L647.2,1224.7L647.3,1237.5L647.4,1254.7L647.6,1276.1L647.7,1301.9L647.9,1334.0L648.0,1366.2L648.1,1398.3L648.3,1430.5ZM647.4,1430.5L647.6,1397.4L647.7,1364.4L647.8,1331.3L648.0,1298.3L648.1,1271.8L648.3,1249.8L648.4,1232.1L648.5,1218.9L648.8,1210.1L652.3,1210.1L652.6,1218.9L652.7,1232.1L652.9,1249.8L653.0,1271.8L653.1,1298.3L653.3,1331.3L653.4,1364.4L653.6,1397.4L653.7,1430.5ZM652.9,1430.5L653.0,1397.2L653.1,1363.9L653.3,1330.6L653.4,1297.3L653.5,1270.7L653.7,1248.5L653.8,1230.7L654.0,1217.4L654.2,1208.5L657.8,1208.5L658.0,1217.4L658.2,1230.7L658.3,1248.5L658.4,1270.7L658.6,1297.3L658.7,1330.6L658.9,1363.9L659.0,1397.2L659.1,1430.5ZM658.3,1430.5L658.4,1400.4L658.5,1370.3L658.7,1340.3L658.8,1310.2L659.0,1286.1L659.1,1266.1L659.2,1250.0L659.4,1238.0L659.6,1230.0L663.2,1230.0L663.5,1238.0L663.6,1250.0L663.7,1266.1L663.9,1286.1L664.0,1310.2L664.2,1340.3L664.3,1370.3L664.4,1400.4L664.6,1430.5ZM663.7,1430.5L663.8,1390.2L664.0,1349.8L664.1,1309.5L664.3,1269.1L664.4,1236.8L664.5,1209.9L664.7,1188.4L664.8,1172.3L665.1,1161.5L668.6,1161.5L668.9,1172.3L669.0,1188.4L669.2,1209.9L669.3,1236.8L669.4,1269.1L669.6,1309.5L669.7,1349.8L669.9,1390.2L670.0,1430.5ZM669.1,1430.5L669.3,1389.4L669.4,1348.4L669.5,1307.3L669.7,1266.3L669.8,1233.4L670.0,1206.1L670.1,1184.2L670.2,1167.7L670.5,1156.8L674.1,1156.8L674.3,1167.7L674.5,1184.2L674.6,1206.1L674.7,1233.4L674.9,1266.3L675.0,1307.3L675.2,1348.4L675.3,1389.4L675.4,1430.5ZM674.6,1430.5L674.7,1396.4L674.8,1362.2L675.0,1328.1L675.1,1293.9L675.3,1266.6L675.4,1243.9L675.5,1225.7L675.7,1212.0L675.9,1202.9L679.5,1202.9L679.7,1212.0L679.9,1225.7L680.0,1243.9L680.2,1266.6L680.3,1293.9L680.4,1328.1L680.6,1362.2L680.7,1396.4L680.8,1430.5ZM680.0,1430.5L680.1,1401.2L680.3,1371.9L680.4,1342.7L680.6,1313.4L680.7,1290.0L680.8,1270.4L681.0,1254.8L681.1,1243.1L681.4,1235.3L684.9,1235.3L685.2,1243.1L685.3,1254.8L685.5,1270.4L685.6,1290.0L685.7,1313.4L685.9,1342.7L686.0,1371.9L686.2,1401.2L686.3,1430.5ZM685.4,1430.5L685.6,1406.7L685.7,1382.8L685.8,1359.0L686.0,1335.1L686.1,1316.0L686.3,1300.1L686.4,1287.4L686.5,1277.9L686.8,1271.5L690.4,1271.5L690.6,1277.9L690.7,1287.4L690.9,1300.1L691.0,1316.0L691.2,1335.1L691.3,1359.0L691.4,1382.8L691.6,1406.7L691.7,1430.5ZM690.9,1430.5L691.0,1403.6L691.1,1376.7L691.3,1349.8L691.4,1322.9L691.5,1301.3L691.7,1283.4L691.8,1269.0L692.0,1258.3L692.2,1251.1L695.8,1251.1L696.0,1258.3L696.2,1269.0L696.3,1283.4L696.5,1301.3L696.6,1322.9L696.7,1349.8L696.9,1376.7L697.0,1403.6L697.1,1430.5ZM696.3,1430.5L696.4,1396.4L696.5,1362.4L696.7,1328.3L696.8,1294.2L697.0,1267.0L697.1,1244.3L697.3,1226.1L697.4,1212.5L697.6,1203.4L701.2,1203.4L701.5,1212.5L701.6,1226.1L701.7,1244.3L701.9,1267.0L702.0,1294.2L702.2,1328.3L702.3,1362.4L702.4,1396.4L702.6,1430.5ZM701.7,1430.5L701.8,1396.6L702.0,1362.6L702.1,1328.7L702.3,1294.8L702.4,1267.6L702.5,1245.0L702.7,1226.9L702.8,1213.3L703.1,1204.3L706.6,1204.3L706.9,1213.3L707.0,1226.9L707.2,1245.0L707.3,1267.6L707.5,1294.8L707.6,1328.7L707.7,1362.6L707.9,1396.6L708.0,1430.5ZM707.1,1430.5L707.3,1387.9L707.4,1345.3L707.5,1302.7L707.7,1260.2L707.8,1226.1L708.0,1197.7L708.1,1175.0L708.3,1158.0L708.5,1146.6L712.1,1146.6L712.3,1158.0L712.5,1175.0L712.6,1197.7L712.7,1226.1L712.9,1260.2L713.0,1302.7L713.2,1345.3L713.3,1387.9L713.4,1430.5ZM712.6,1430.5L712.7,1409.8L712.8,1389.0L713.0,1368.3L713.1,1347.6L713.3,1331.0L713.4,1317.2L713.5,1306.1L713.7,1297.8L713.9,1292.3L717.5,1292.3L717.8,1297.8L717.9,1306.1L718.0,1317.2L718.2,1331.0L718.3,1347.6L718.5,1368.3L718.6,1389.0L718.7,1409.8L718.9,1430.5ZM718.0,1430.5L718.1,1394.2L718.3,1357.8L718.4,1321.5L718.6,1285.2L718.7,1256.1L718.8,1231.9L719.0,1212.5L719.1,1198.0L719.4,1188.3L722.9,1188.3L723.2,1198.0L723.3,1212.5L723.5,1231.9L723.6,1256.1L723.7,1285.2L723.9,1321.5L724.0,1357.8L724.2,1394.2L724.3,1430.5ZM723.4,1430.5L723.6,1409.6L723.7,1388.6L723.8,1367.7L724.0,1346.7L724.1,1330.0L724.3,1316.0L724.4,1304.9L724.5,1296.5L724.8,1290.9L728.4,1290.9L728.6,1296.5L728.8,1304.9L728.9,1316.0L729.0,1330.0L729.2,1346.7L729.3,1367.7L729.5,1388.6L729.6,1409.6L729.7,1430.5ZM728.8,1430.5L729.0,1396.3L729.1,1362.0L729.3,1327.8L729.4,1293.5L729.6,1266.1L729.7,1243.3L729.8,1225.0L730.0,1211.3L730.2,1202.2L733.8,1202.2L734.0,1211.3L734.2,1225.0L734.3,1243.3L734.5,1266.1L734.6,1293.5L734.8,1327.8L734.9,1362.0L735.0,1396.3L735.2,1430.5ZM734.3,1430.5L734.4,1398.5L734.5,1366.5L734.7,1334.4L734.8,1302.4L735.0,1276.8L735.1,1255.4L735.3,1238.3L735.4,1225.5L735.7,1217.0L739.2,1217.0L739.5,1225.5L739.6,1238.3L739.8,1255.4L739.9,1276.8L740.0,1302.4L740.2,1334.4L740.3,1366.5L740.5,1398.5L740.6,1430.5ZM739.7,1430.5L739.8,1401.7L740.0,1372.9L740.1,1344.1L740.3,1315.4L740.4,1292.3L740.5,1273.1L740.7,1257.8L740.8,1246.3L741.1,1238.6L744.7,1238.6L744.9,1246.3L745.1,1257.8L745.2,1273.1L745.3,1292.3L745.5,1315.4L745.6,1344.1L745.8,1372.9L745.9,1401.7L746.0,1430.5ZM745.1,1430.5L745.3,1402.4L745.4,1374.3L745.5,1346.2L745.7,1318.1L745.8,1295.6L746.0,1276.9L746.1,1261.9L746.3,1250.7L746.5,1243.2L750.1,1243.2L750.3,1250.7L750.5,1261.9L750.6,1276.9L750.8,1295.6L750.9,1318.1L751.1,1346.2L751.2,1374.3L751.3,1402.4L751.5,1430.5ZM750.6,1430.5L750.7,1389.9L750.8,1349.3L751.0,1308.7L751.1,1268.1L751.3,1235.6L751.4,1208.5L751.5,1186.9L751.7,1170.6L751.9,1159.8L755.5,1159.8L755.8,1170.6L755.9,1186.9L756.1,1208.5L756.2,1235.6L756.3,1268.1L756.5,1308.7L756.6,1349.3L756.8,1389.9L756.9,1430.5ZM756.0,1430.5L756.1,1391.6L756.3,1352.8L756.4,1313.9L756.6,1275.0L756.7,1243.9L756.8,1218.0L757.0,1197.3L757.1,1181.8L757.4,1171.4L761.0,1171.4L761.2,1181.8L761.3,1197.3L761.5,1218.0L761.6,1243.9L761.8,1275.0L761.9,1313.9L762.1,1352.8L762.2,1391.6L762.3,1430.5ZM761.4,1430.5L761.5,1403.1L761.7,1375.7L761.8,1348.3L762.0,1320.9L762.1,1299.0L762.3,1280.7L762.4,1266.1L762.5,1255.1L762.8,1247.8L766.4,1247.8L766.6,1255.1L766.8,1266.1L766.9,1280.7L767.1,1299.0L767.2,1320.9L767.4,1348.3L767.5,1375.7L767.6,1403.1L767.8,1430.5ZM766.8,1430.5L767.0,1394.2L767.1,1357.8L767.3,1321.5L767.4,1285.2L767.6,1256.1L767.7,1231.9L767.8,1212.5L768.0,1198.0L768.2,1188.3L771.8,1188.3L772.1,1198.0L772.2,1212.5L772.3,1231.9L772.5,1256.1L772.6,1285.2L772.8,1321.5L772.9,1357.8L773.1,1394.2L773.2,1430.5ZM772.3,1430.5L772.4,1401.5L772.5,1372.6L772.7,1343.6L772.8,1314.6L773.0,1291.5L773.1,1272.2L773.3,1256.7L773.4,1245.1L773.7,1237.4L777.2,1237.4L777.5,1245.1L777.6,1256.7L777.8,1272.2L777.9,1291.5L778.1,1314.6L778.2,1343.6L778.4,1372.6L778.5,1401.5L778.6,1430.5ZM777.7,1430.5L777.8,1398.7L778.0,1366.8L778.1,1335.0L778.3,1303.1L778.4,1277.6L778.6,1256.4L778.7,1239.4L778.8,1226.7L779.1,1218.2L782.7,1218.2L782.9,1226.7L783.1,1239.4L783.2,1256.4L783.3,1277.6L783.5,1303.1L783.6,1335.0L783.8,1366.8L783.9,1398.7L784.1,1430.5ZM783.1,1430.5L783.3,1402.6L783.4,1374.7L783.5,1346.8L783.7,1318.8L783.8,1296.5L784.0,1277.9L784.1,1263.0L784.3,1251.8L784.5,1244.4L788.1,1244.4L788.4,1251.8L788.5,1263.0L788.6,1277.9L788.8,1296.5L788.9,1318.8L789.1,1346.8L789.2,1374.7L789.4,1402.6L789.5,1430.5ZM788.6,1430.5L788.7,1399.0L788.8,1367.4L789.0,1335.9L789.1,1304.4L789.3,1279.2L789.4,1258.1L789.5,1241.3L789.7,1228.7L790.0,1220.3L793.5,1220.3L793.8,1228.7L793.9,1241.3L794.1,1258.1L794.2,1279.2L794.4,1304.4L794.5,1335.9L794.7,1367.4L794.8,1399.0L794.9,1430.5ZM794.0,1430.5L794.1,1390.3L794.3,1350.1L794.4,1309.9L794.6,1269.6L794.7,1237.5L794.8,1210.7L795.0,1189.2L795.1,1173.1L795.4,1162.4L799.0,1162.4L799.2,1173.1L799.4,1189.2L799.5,1210.7L799.6,1237.5L799.8,1269.6L799.9,1309.9L800.1,1350.1L800.2,1390.3L800.4,1430.5ZM799.4,1430.5L799.5,1406.9L799.7,1383.3L799.8,1359.7L800.0,1336.1L800.1,1317.2L800.3,1301.4L800.4,1288.8L800.6,1279.4L800.8,1273.1L804.4,1273.1L804.6,1279.4L804.8,1288.8L804.9,1301.4L805.1,1317.2L805.2,1336.1L805.4,1359.7L805.5,1383.3L805.7,1406.9L805.8,1430.5ZM804.8,1430.5L805.0,1402.9L805.1,1375.2L805.3,1347.6L805.4,1319.9L805.6,1297.8L805.7,1279.4L805.8,1264.6L806.0,1253.6L806.2,1246.2L809.8,1246.2L810.1,1253.6L810.2,1264.6L810.4,1279.4L810.5,1297.8L810.6,1319.9L810.8,1347.6L810.9,1375.2L811.1,1402.9L811.2,1430.5ZM810.3,1430.5L810.4,1399.6L810.5,1368.8L810.7,1337.9L810.8,1307.0L811.0,1282.3L811.1,1261.7L811.3,1245.3L811.4,1232.9L811.7,1224.7L815.2,1224.7L815.5,1232.9L815.7,1245.3L815.8,1261.7L815.9,1282.3L816.1,1307.0L816.2,1337.9L816.4,1368.8L816.5,1399.6L816.7,1430.5ZM815.7,1430.5L815.8,1390.5L816.0,1350.5L816.1,1310.6L816.3,1270.6L816.4,1238.6L816.6,1212.0L816.7,1190.7L816.8,1174.7L817.1,1164.0L820.7,1164.0L820.9,1174.7L821.1,1190.7L821.2,1212.0L821.4,1238.6L821.5,1270.6L821.7,1310.6L821.8,1350.5L822.0,1390.5L822.1,1430.5ZM821.1,1430.5L821.3,1386.8L821.4,1343.0L821.5,1299.3L821.7,1255.6L821.8,1220.6L822.0,1191.5L822.1,1168.2L822.3,1150.7L822.5,1139.0L826.1,1139.0L826.4,1150.7L826.5,1168.2L826.7,1191.5L826.8,1220.6L826.9,1255.6L827.1,1299.3L827.2,1343.0L827.4,1386.8L827.5,1430.5ZM826.6,1430.5L826.7,1407.9L826.8,1385.2L827.0,1362.6L827.1,1340.0L827.3,1321.9L827.4,1306.8L827.6,1294.7L827.7,1285.6L828.0,1279.6L831.5,1279.6L831.8,1285.6L831.9,1294.7L832.1,1306.8L832.2,1321.9L832.4,1340.0L832.5,1362.6L832.7,1385.2L832.8,1407.9L832.9,1430.5ZM832.0,1430.5L832.1,1396.3L832.3,1362.0L832.4,1327.8L832.6,1293.5L832.7,1266.1L832.8,1243.3L833.0,1225.0L833.1,1211.3L833.4,1202.2L837.0,1202.2L837.2,1211.3L837.4,1225.0L837.5,1243.3L837.7,1266.1L837.8,1293.5L838.0,1327.8L838.1,1362.0L838.2,1396.3L838.4,1430.5ZM837.4,1430.5L837.5,1409.1L837.7,1387.7L837.8,1366.3L838.0,1344.9L838.1,1327.8L838.3,1313.6L838.4,1302.2L838.6,1293.6L838.8,1287.9L842.4,1287.9L842.7,1293.6L842.8,1302.2L842.9,1313.6L843.1,1327.8L843.2,1344.9L843.4,1366.3L843.5,1387.7L843.7,1409.1L843.8,1430.5ZM842.8,1430.5L843.0,1396.6L843.1,1362.6L843.3,1328.7L843.4,1294.8L843.6,1267.6L843.7,1245.0L843.8,1226.9L844.0,1213.3L844.2,1204.3L847.8,1204.3L848.1,1213.3L848.2,1226.9L848.4,1245.0L848.5,1267.6L848.7,1294.8L848.8,1328.7L849.0,1362.6L849.1,1396.6L849.2,1430.5ZM848.3,1430.5L848.4,1387.9L848.5,1345.3L848.7,1302.7L848.8,1260.2L849.0,1226.1L849.1,1197.7L849.3,1175.0L849.4,1158.0L849.7,1146.6L853.3,1146.6L853.5,1158.0L853.7,1175.0L853.8,1197.7L854.0,1226.1L854.1,1260.2L854.3,1302.7L854.4,1345.3L854.5,1387.9L854.7,1430.5ZM853.7,1430.5L853.8,1394.8L854.0,1359.1L854.1,1323.4L854.3,1287.7L854.4,1259.1L854.6,1235.3L854.7,1216.3L854.9,1202.0L855.1,1192.5L858.7,1192.5L858.9,1202.0L859.1,1216.3L859.2,1235.3L859.4,1259.1L859.5,1287.7L859.7,1323.4L859.8,1359.1L860.0,1394.8L860.1,1430.5ZM859.1,1430.5L859.3,1386.5L859.4,1342.6L859.5,1298.6L859.7,1254.6L859.8,1219.5L860.0,1190.2L860.1,1166.7L860.3,1149.1L860.5,1137.4L864.1,1137.4L864.4,1149.1L864.5,1166.7L864.7,1190.2L864.8,1219.5L865.0,1254.6L865.1,1298.6L865.3,1342.6L865.4,1386.5L865.5,1430.5ZM864.5,1430.5L864.7,1386.4L864.8,1342.4L865.0,1298.3L865.1,1254.2L865.3,1219.0L865.4,1189.6L865.6,1166.1L865.7,1148.5L866.0,1136.7L869.5,1136.7L869.8,1148.5L870.0,1166.1L870.1,1189.6L870.2,1219.0L870.4,1254.2L870.5,1298.3L870.7,1342.4L870.8,1386.4L871.0,1430.5ZM870.0,1430.5L870.1,1385.6L870.3,1340.8L870.4,1295.9L870.6,1251.0L870.7,1215.1L870.8,1185.2L871.0,1161.3L871.1,1143.4L871.4,1131.4L875.0,1131.4L875.2,1143.4L875.4,1161.3L875.5,1185.2L875.7,1215.1L875.8,1251.0L876.0,1295.9L876.1,1340.8L876.3,1385.6L876.4,1430.5ZM875.4,1430.5L875.5,1386.4L875.7,1342.4L875.8,1298.3L876.0,1254.2L876.1,1219.0L876.3,1189.6L876.4,1166.1L876.6,1148.5L876.8,1136.7L880.4,1136.7L880.7,1148.5L880.8,1166.1L881.0,1189.6L881.1,1219.0L881.3,1254.2L881.4,1298.3L881.6,1342.4L881.7,1386.4L881.8,1430.5ZM880.8,1430.5L881.0,1388.5L881.1,1346.5L881.3,1304.5L881.4,1262.6L881.6,1229.0L881.7,1201.0L881.9,1178.6L882.0,1161.8L882.3,1150.6L885.8,1150.6L886.1,1161.8L886.2,1178.6L886.4,1201.0L886.5,1229.0L886.7,1262.6L886.8,1304.5L887.0,1346.5L887.1,1388.5L887.3,1430.5ZM886.3,1430.5L886.4,1385.2L886.5,1339.9L886.7,1294.6L886.8,1249.4L887.0,1213.1L887.1,1182.9L887.3,1158.8L887.4,1140.7L887.7,1128.6L891.3,1128.6L891.5,1140.7L891.7,1158.8L891.8,1182.9L892.0,1213.1L892.1,1249.4L892.3,1294.6L892.4,1339.9L892.6,1385.2L892.7,1430.5ZM891.7,1430.5L891.8,1395.7L892.0,1360.8L892.1,1326.0L892.3,1291.2L892.4,1263.3L892.6,1240.1L892.7,1221.5L892.9,1207.6L893.1,1198.3L896.7,1198.3L897.0,1207.6L897.1,1221.5L897.3,1240.1L897.4,1263.3L897.5,1291.2L897.7,1326.0L897.9,1360.8L898.0,1395.7L898.1,1430.5ZM897.1,1430.5L897.3,1389.4L897.4,1348.3L897.5,1307.2L897.7,1266.0L897.9,1233.1L898.0,1205.7L898.1,1183.8L898.3,1167.4L898.5,1156.4L902.1,1156.4L902.4,1167.4L902.5,1183.8L902.7,1205.7L902.8,1233.1L903.0,1266.0L903.1,1307.2L903.3,1348.3L903.4,1389.4L903.6,1430.5ZM902.5,1430.5L902.7,1390.3L902.8,1350.1L903.0,1309.9L903.1,1269.6L903.3,1237.5L903.4,1210.7L903.6,1189.2L903.7,1173.1L904.0,1162.4L907.6,1162.4L907.8,1173.1L908.0,1189.2L908.1,1210.7L908.3,1237.5L908.4,1269.6L908.6,1309.9L908.7,1350.1L908.9,1390.3L909.0,1430.5ZM908.0,1430.5L908.1,1394.0L908.3,1357.5L908.4,1321.0L908.6,1284.5L908.7,1255.3L908.9,1231.0L909.0,1211.5L909.2,1196.9L909.4,1187.2L913.0,1187.2L913.2,1196.9L913.4,1211.5L913.5,1231.0L913.7,1255.3L913.8,1284.5L914.0,1321.0L914.1,1357.5L914.3,1394.0L914.4,1430.5ZM913.4,1430.5L913.5,1395.5L913.7,1360.4L913.8,1325.4L914.0,1290.3L914.1,1262.3L914.3,1238.9L914.4,1220.3L914.6,1206.2L914.8,1196.9L918.4,1196.9L918.7,1206.2L918.8,1220.3L919.0,1238.9L919.1,1262.3L919.3,1290.3L919.4,1325.4L919.6,1360.4L919.7,1395.5L919.9,1430.5ZM918.8,1430.5L919.0,1403.0L919.1,1375.6L919.3,1348.1L919.4,1320.6L919.6,1298.7L919.7,1280.4L919.9,1265.7L920.0,1254.7L920.3,1247.4L923.8,1247.4L924.1,1254.7L924.3,1265.7L924.4,1280.4L924.6,1298.7L924.7,1320.6L924.9,1348.1L925.0,1375.6L925.2,1403.0L925.3,1430.5ZM924.3,1430.5L924.4,1398.2L924.5,1366.0L924.7,1333.7L924.9,1301.4L925.0,1275.6L925.1,1254.1L925.3,1236.9L925.4,1224.0L925.7,1215.4L929.3,1215.4L929.5,1224.0L929.7,1236.9L929.8,1254.1L930.0,1275.6L930.1,1301.4L930.3,1333.7L930.4,1366.0L930.6,1398.2L930.7,1430.5ZM929.7,1430.5L929.8,1404.9L930.0,1379.4L930.1,1353.8L930.3,1328.3L930.4,1307.8L930.6,1290.8L930.7,1277.1L930.9,1266.9L931.1,1260.1L934.7,1260.1L935.0,1266.9L935.1,1277.1L935.3,1290.8L935.4,1307.8L935.6,1328.3L935.7,1353.8L935.9,1379.4L936.0,1404.9L936.2,1430.5ZM935.1,1430.5L935.3,1395.6L935.4,1360.6L935.5,1325.7L935.7,1290.8L935.9,1262.8L936.0,1239.5L936.1,1220.9L936.3,1206.9L936.6,1197.6L940.1,1197.6L940.4,1206.9L940.6,1220.9L940.7,1239.5L940.8,1262.8L941.0,1290.8L941.2,1325.7L941.3,1360.6L941.4,1395.6L941.6,1430.5ZM940.5,1430.5L940.7,1390.7L940.8,1350.9L941.0,1311.1L941.1,1271.3L941.3,1239.5L941.4,1213.0L941.6,1191.7L941.7,1175.8L942.0,1165.2L945.6,1165.2L945.8,1175.8L946.0,1191.7L946.1,1213.0L946.3,1239.5L946.4,1271.3L946.6,1311.1L946.7,1350.9L946.9,1390.7L947.0,1430.5ZM946.0,1430.5L946.1,1388.3L946.3,1346.2L946.4,1304.0L946.6,1261.8L946.7,1228.1L946.9,1200.0L947.0,1177.5L947.2,1160.6L947.4,1149.4L951.0,1149.4L951.3,1160.6L951.4,1177.5L951.6,1200.0L951.7,1228.1L951.9,1261.8L952.0,1304.0L952.2,1346.2L952.3,1388.3L952.4,1430.5ZM951.4,1430.5L951.5,1386.1L951.7,1341.7L951.8,1297.3L952.0,1252.8L952.1,1217.3L952.3,1187.7L952.4,1164.0L952.6,1146.2L952.8,1134.4L956.4,1134.4L956.7,1146.2L956.8,1164.0L957.0,1187.7L957.1,1217.3L957.3,1252.8L957.4,1297.3L957.6,1341.7L957.7,1386.1L957.9,1430.5ZM956.8,1430.5L957.0,1385.8L957.1,1341.0L957.3,1296.3L957.4,1251.6L957.6,1215.8L957.7,1186.0L957.9,1162.1L958.0,1144.2L958.3,1132.3L961.9,1132.3L962.1,1144.2L962.3,1162.1L962.4,1186.0L962.6,1215.8L962.7,1251.6L962.9,1296.3L963.0,1341.0L963.2,1385.8L963.3,1430.5ZM962.3,1430.5L962.4,1385.3L962.5,1340.1L962.7,1295.0L962.9,1249.8L963.0,1213.6L963.1,1183.5L963.3,1159.4L963.4,1141.3L963.7,1129.3L967.3,1129.3L967.6,1141.3L967.7,1159.4L967.9,1183.5L968.0,1213.6L968.1,1249.8L968.3,1295.0L968.5,1340.1L968.6,1385.3L968.7,1430.5ZM967.7,1430.5L967.8,1385.3L968.0,1340.1L968.1,1295.0L968.3,1249.8L968.4,1213.6L968.6,1183.5L968.7,1159.4L968.9,1141.3L969.1,1129.3L972.7,1129.3L973.0,1141.3L973.1,1159.4L973.3,1183.5L973.4,1213.6L973.6,1249.8L973.7,1295.0L973.9,1340.1L974.0,1385.3L974.2,1430.5ZM973.1,1430.5L973.3,1385.2L973.4,1339.9L973.5,1294.6L973.7,1249.4L973.9,1213.1L974.0,1182.9L974.2,1158.8L974.3,1140.7L974.6,1128.6L978.1,1128.6L978.4,1140.7L978.6,1158.8L978.7,1182.9L978.9,1213.1L979.0,1249.4L979.2,1294.6L979.3,1339.9L979.5,1385.2L979.6,1430.5ZM978.5,1430.5L978.7,1385.1L978.8,1339.7L979.0,1294.2L979.1,1248.8L979.3,1212.5L979.4,1182.2L979.6,1158.0L979.7,1139.8L980.0,1127.7L983.6,1127.7L983.8,1139.8L984.0,1158.0L984.1,1182.2L984.3,1212.5L984.4,1248.8L984.6,1294.2L984.8,1339.7L984.9,1385.1L985.0,1430.5ZM984.0,1430.5L984.1,1385.0L984.3,1339.5L984.4,1294.0L984.6,1248.5L984.7,1212.1L984.9,1181.8L985.0,1157.5L985.2,1139.3L985.4,1127.2L989.0,1127.2L989.3,1139.3L989.4,1157.5L989.6,1181.8L989.7,1212.1L989.9,1248.5L990.0,1294.0L990.2,1339.5L990.3,1385.0L990.5,1430.5ZM989.4,1430.5L989.5,1385.2L989.7,1339.8L989.8,1294.5L990.0,1249.2L990.1,1212.9L990.3,1182.7L990.4,1158.5L990.6,1140.4L990.9,1128.3L994.4,1128.3L994.7,1140.4L994.9,1158.5L995.0,1182.7L995.2,1212.9L995.3,1249.2L995.5,1294.5L995.6,1339.8L995.8,1385.2L995.9,1430.5ZM994.8,1430.5L995.0,1385.8L995.1,1341.1L995.3,1296.4L995.4,1251.7L995.6,1215.9L995.7,1186.1L995.9,1162.3L996.0,1144.4L996.3,1132.5L999.9,1132.5L1000.1,1144.4L1000.3,1162.3L1000.4,1186.1L1000.6,1215.9L1000.7,1251.7L1000.9,1296.4L1001.0,1341.1L1001.2,1385.8L1001.3,1430.5ZM1000.3,1430.5L1000.4,1384.3L1000.5,1338.2L1000.7,1292.0L1000.9,1245.9L1001.0,1209.0L1001.2,1178.2L1001.3,1153.6L1001.5,1135.1L1001.7,1122.8L1005.3,1122.8L1005.6,1135.1L1005.7,1153.6L1005.9,1178.2L1006.0,1209.0L1006.2,1245.9L1006.3,1292.0L1006.5,1338.2L1006.6,1384.3L1006.8,1430.5ZM1005.7,1430.5L1005.8,1385.0L1006.0,1339.6L1006.1,1294.1L1006.3,1248.6L1006.4,1212.3L1006.6,1182.0L1006.7,1157.7L1006.9,1139.5L1007.2,1127.4L1010.7,1127.4L1011.0,1139.5L1011.1,1157.7L1011.3,1182.0L1011.4,1212.3L1011.6,1248.6L1011.8,1294.1L1011.9,1339.6L1012.0,1385.0L1012.2,1430.5ZM1011.1,1430.5L1011.3,1385.0L1011.4,1339.5L1011.6,1293.9L1011.7,1248.4L1011.9,1212.0L1012.0,1181.6L1012.2,1157.3L1012.3,1139.1L1012.6,1127.0L1016.2,1127.0L1016.4,1139.1L1016.6,1157.3L1016.7,1181.6L1016.9,1212.0L1017.0,1248.4L1017.2,1293.9L1017.3,1339.5L1017.5,1385.0L1017.6,1430.5ZM1016.5,1430.5L1016.7,1384.1L1016.8,1337.7L1017.0,1291.3L1017.1,1244.9L1017.3,1207.8L1017.4,1176.9L1017.6,1152.1L1017.7,1133.6L1018.0,1121.2L1021.6,1121.2L1021.9,1133.6L1022.0,1152.1L1022.2,1176.9L1022.3,1207.8L1022.5,1244.9L1022.6,1291.3L1022.8,1337.7L1022.9,1384.1L1023.1,1430.5ZM1022.0,1430.5L1022.1,1397.0L1022.3,1363.5L1022.4,1330.0L1022.6,1296.5L1022.7,1269.7L1022.9,1247.3L1023.0,1229.4L1023.2,1216.0L1023.4,1207.1L1027.0,1207.1L1027.3,1216.0L1027.4,1229.4L1027.6,1247.3L1027.7,1269.7L1027.9,1296.5L1028.0,1330.0L1028.2,1363.5L1028.3,1397.0L1028.5,1430.5ZM1027.4,1430.5L1027.5,1394.5L1027.7,1358.5L1027.8,1322.5L1028.0,1286.6L1028.2,1257.8L1028.3,1233.8L1028.5,1214.6L1028.6,1200.2L1028.9,1190.6L1032.4,1190.6L1032.7,1200.2L1032.9,1214.6L1033.0,1233.8L1033.2,1257.8L1033.3,1286.6L1033.5,1322.5L1033.6,1358.5L1033.8,1394.5L1033.9,1430.5ZM1032.8,1430.5L1033.0,1390.7L1033.1,1350.9L1033.3,1311.1L1033.4,1271.3L1033.6,1239.5L1033.7,1213.0L1033.9,1191.7L1034.0,1175.8L1034.3,1165.2L1037.9,1165.2L1038.1,1175.8L1038.3,1191.7L1038.4,1213.0L1038.6,1239.5L1038.7,1271.3L1038.9,1311.1L1039.1,1350.9L1039.2,1390.7L1039.3,1430.5ZM1038.3,1430.5L1038.4,1385.7L1038.6,1340.8L1038.7,1296.0L1038.9,1251.2L1039.0,1215.3L1039.2,1185.4L1039.3,1161.5L1039.5,1143.6L1039.7,1131.6L1043.3,1131.6L1043.6,1143.6L1043.7,1161.5L1043.9,1185.4L1044.0,1215.3L1044.2,1251.2L1044.3,1296.0L1044.5,1340.8L1044.6,1385.7L1044.8,1430.5ZM1043.7,1430.5L1043.8,1404.8L1044.0,1379.2L1044.1,1353.5L1044.3,1327.8L1044.4,1307.3L1044.6,1290.2L1044.7,1276.5L1044.9,1266.2L1045.2,1259.4L1048.7,1259.4L1049.0,1266.2L1049.2,1276.5L1049.3,1290.2L1049.5,1307.3L1049.6,1327.8L1049.8,1353.5L1049.9,1379.2L1050.1,1404.8L1050.2,1430.5ZM1049.1,1430.5L1049.3,1387.7L1049.4,1344.8L1049.6,1302.0L1049.7,1259.2L1049.9,1224.9L1050.0,1196.4L1050.2,1173.5L1050.3,1156.4L1050.6,1145.0L1054.2,1145.0L1054.4,1156.4L1054.6,1173.5L1054.7,1196.4L1054.9,1224.9L1055.0,1259.2L1055.2,1302.0L1055.4,1344.8L1055.5,1387.7L1055.6,1430.5ZM1054.6,1430.5L1054.7,1385.2L1054.8,1339.9L1055.0,1294.6L1055.2,1249.4L1055.3,1213.1L1055.5,1182.9L1055.6,1158.8L1055.8,1140.7L1056.0,1128.6L1059.6,1128.6L1059.9,1140.7L1060.0,1158.8L1060.2,1182.9L1060.3,1213.1L1060.5,1249.4L1060.6,1294.6L1060.8,1339.9L1060.9,1385.2L1061.1,1430.5ZM1060.0,1430.5L1060.1,1386.2L1060.3,1341.9L1060.4,1297.6L1060.6,1253.3L1060.7,1217.8L1060.9,1188.3L1061.0,1164.6L1061.2,1146.9L1061.5,1135.1L1065.0,1135.1L1065.3,1146.9L1065.5,1164.6L1065.6,1188.3L1065.7,1217.8L1065.9,1253.3L1066.1,1297.6L1066.2,1341.9L1066.4,1386.2L1066.5,1430.5ZM1065.4,1430.5L1065.6,1383.2L1065.7,1336.0L1065.8,1288.7L1066.0,1241.4L1066.2,1203.6L1066.3,1172.1L1066.5,1146.9L1066.6,1128.0L1066.9,1115.4L1070.5,1115.4L1070.7,1128.0L1070.9,1146.9L1071.0,1172.1L1071.2,1203.6L1071.3,1241.4L1071.5,1288.7L1071.6,1336.0L1071.8,1383.2L1071.9,1430.5ZM1070.8,1430.5L1071.0,1383.8L1071.1,1337.1L1071.3,1290.5L1071.4,1243.8L1071.6,1206.4L1071.7,1175.3L1071.9,1150.4L1072.0,1131.7L1072.3,1119.3L1075.9,1119.3L1076.2,1131.7L1076.3,1150.4L1076.5,1175.3L1076.6,1206.4L1076.8,1243.8L1076.9,1290.5L1077.1,1337.1L1077.2,1383.8L1077.4,1430.5ZM1076.3,1430.5L1076.4,1384.9L1076.6,1339.2L1076.7,1293.6L1076.9,1248.0L1077.0,1211.5L1077.2,1181.1L1077.3,1156.7L1077.5,1138.5L1077.7,1126.3L1081.3,1126.3L1081.6,1138.5L1081.7,1156.7L1081.9,1181.1L1082.0,1211.5L1082.2,1248.0L1082.4,1293.6L1082.5,1339.2L1082.6,1384.9L1082.8,1430.5ZM1081.7,1430.5L1081.8,1383.9L1082.0,1337.3L1082.1,1290.8L1082.3,1244.2L1082.5,1206.9L1082.6,1175.9L1082.7,1151.0L1082.9,1132.4L1083.2,1120.0L1086.8,1120.0L1087.0,1132.4L1087.2,1151.0L1087.3,1175.9L1087.5,1206.9L1087.6,1244.2L1087.8,1290.8L1087.9,1337.3L1088.1,1383.9L1088.2,1430.5ZM1087.1,1430.5L1087.3,1384.2L1087.4,1337.8L1087.6,1291.5L1087.7,1245.2L1087.9,1208.1L1088.0,1177.2L1088.2,1152.5L1088.3,1134.0L1088.6,1121.6L1092.2,1121.6L1092.4,1134.0L1092.6,1152.5L1092.7,1177.2L1092.9,1208.1L1093.0,1245.2L1093.2,1291.5L1093.4,1337.8L1093.5,1384.2L1093.6,1430.5ZM1092.6,1430.5L1092.7,1387.1L1092.8,1343.7L1093.0,1300.4L1093.2,1257.0L1093.3,1222.3L1093.5,1193.4L1093.6,1170.2L1093.8,1152.9L1094.0,1141.3L1097.6,1141.3L1097.9,1152.9L1098.0,1170.2L1098.2,1193.4L1098.3,1222.3L1098.5,1257.0L1098.6,1300.4L1098.8,1343.7L1098.9,1387.1L1099.1,1430.5ZM1098.0,1430.5L1098.1,1384.8L1098.3,1339.0L1098.4,1293.3L1098.6,1247.6L1098.7,1211.0L1098.9,1180.5L1099.0,1156.1L1099.2,1137.8L1099.5,1125.6L1103.0,1125.6L1103.3,1137.8L1103.5,1156.1L1103.6,1180.5L1103.8,1211.0L1103.9,1247.6L1104.1,1293.3L1104.2,1339.0L1104.4,1384.8L1104.5,1430.5ZM1103.4,1430.5L1103.6,1384.9L1103.7,1339.4L1103.9,1293.8L1104.0,1248.2L1104.2,1211.8L1104.3,1181.4L1104.5,1157.1L1104.6,1138.9L1104.9,1126.7L1108.5,1126.7L1108.7,1138.9L1108.9,1157.1L1109.0,1181.4L1109.2,1211.8L1109.3,1248.2L1109.5,1293.8L1109.7,1339.4L1109.8,1384.9L1109.9,1430.5ZM1108.9,1430.5L1109.0,1385.2L1109.1,1339.9L1109.3,1294.6L1109.5,1249.4L1109.6,1213.1L1109.7,1182.9L1109.9,1158.8L1110.1,1140.7L1110.3,1128.6L1113.9,1128.6L1114.2,1140.7L1114.3,1158.8L1114.5,1182.9L1114.6,1213.1L1114.8,1249.4L1114.9,1294.6L1115.1,1339.9L1115.2,1385.2L1115.4,1430.5ZM1114.3,1430.5L1114.4,1385.5L1114.6,1340.5L1114.7,1295.5L1114.9,1250.4L1115.0,1214.4L1115.2,1184.4L1115.3,1160.4L1115.5,1142.4L1115.8,1130.4L1119.3,1130.4L1119.6,1142.4L1119.8,1160.4L1119.9,1184.4L1120.0,1214.4L1120.2,1250.4L1120.4,1295.5L1120.5,1340.5L1120.7,1385.5L1120.8,1430.5ZM1119.7,1430.5L1119.9,1384.0L1120.0,1337.5L1120.1,1291.0L1120.3,1244.5L1120.5,1207.3L1120.6,1176.3L1120.8,1151.5L1120.9,1132.9L1121.2,1120.5L1124.8,1120.5L1125.0,1132.9L1125.2,1151.5L1125.3,1176.3L1125.5,1207.3L1125.6,1244.5L1125.8,1291.0L1125.9,1337.5L1126.1,1384.0L1126.2,1430.5ZM1125.1,1430.5L1125.3,1384.9L1125.4,1339.2L1125.6,1293.6L1125.7,1248.0L1125.9,1211.5L1126.0,1181.1L1126.2,1156.7L1126.3,1138.5L1126.6,1126.3L1130.2,1126.3L1130.5,1138.5L1130.6,1156.7L1130.8,1181.1L1130.9,1211.5L1131.1,1248.0L1131.2,1293.6L1131.4,1339.2L1131.5,1384.9L1131.7,1430.5ZM1130.6,1430.5L1130.7,1384.1L1130.9,1337.6L1131.0,1291.2L1131.2,1244.7L1131.3,1207.6L1131.5,1176.6L1131.6,1151.9L1131.8,1133.3L1132.0,1120.9L1135.6,1120.9L1135.9,1133.3L1136.0,1151.9L1136.2,1176.6L1136.3,1207.6L1136.5,1244.7L1136.7,1291.2L1136.8,1337.6L1136.9,1384.1L1137.1,1430.5ZM1136.0,1430.5L1136.1,1383.7L1136.3,1336.9L1136.4,1290.1L1136.6,1243.4L1136.8,1205.9L1136.9,1174.7L1137.0,1149.8L1137.2,1131.1L1137.5,1118.6L1141.0,1118.6L1141.3,1131.1L1141.5,1149.8L1141.6,1174.7L1141.8,1205.9L1141.9,1243.4L1142.1,1290.1L1142.2,1336.9L1142.4,1383.7L1142.5,1430.5ZM1141.4,1430.5L1141.6,1383.9L1141.7,1337.3L1141.9,1290.8L1142.0,1244.2L1142.2,1206.9L1142.3,1175.9L1142.5,1151.0L1142.6,1132.4L1142.9,1120.0L1146.5,1120.0L1146.7,1132.4L1146.9,1151.0L1147.1,1175.9L1147.2,1206.9L1147.3,1244.2L1147.5,1290.8L1147.7,1337.3L1147.8,1383.9L1148.0,1430.5ZM1146.9,1430.5L1147.0,1387.9L1147.1,1345.3L1147.3,1302.7L1147.5,1260.0L1147.6,1225.9L1147.8,1197.5L1147.9,1174.8L1148.1,1157.8L1148.3,1146.4L1151.9,1146.4L1152.2,1157.8L1152.3,1174.8L1152.5,1197.5L1152.6,1225.9L1152.8,1260.0L1152.9,1302.7L1153.1,1345.3L1153.2,1387.9L1153.4,1430.5ZM1152.3,1430.5L1152.4,1384.5L1152.6,1338.4L1152.7,1292.3L1152.9,1246.3L1153.0,1209.5L1153.2,1178.8L1153.3,1154.2L1153.5,1135.8L1153.8,1123.5L1157.3,1123.5L1157.6,1135.8L1157.8,1154.2L1157.9,1178.8L1158.1,1209.5L1158.2,1246.3L1158.4,1292.3L1158.5,1338.4L1158.7,1384.5L1158.8,1430.5ZM1157.7,1430.5L1157.9,1386.1L1158.0,1341.7L1158.2,1297.3L1158.3,1252.8L1158.5,1217.3L1158.6,1187.7L1158.8,1164.0L1158.9,1146.2L1159.2,1134.4L1162.8,1134.4L1163.0,1146.2L1163.2,1164.0L1163.3,1187.7L1163.5,1217.3L1163.6,1252.8L1163.8,1297.3L1164.0,1341.7L1164.1,1386.1L1164.2,1430.5ZM1163.1,1430.5L1163.3,1384.6L1163.4,1338.7L1163.6,1292.8L1163.8,1246.8L1163.9,1210.1L1164.0,1179.5L1164.2,1155.0L1164.4,1136.6L1164.6,1124.4L1168.2,1124.4L1168.5,1136.6L1168.6,1155.0L1168.8,1179.5L1168.9,1210.1L1169.1,1246.8L1169.2,1292.8L1169.4,1338.7L1169.5,1384.6L1169.7,1430.5ZM1168.6,1430.5L1168.7,1385.0L1168.9,1339.5L1169.0,1293.9L1169.2,1248.4L1169.3,1212.0L1169.5,1181.6L1169.6,1157.3L1169.8,1139.1L1170.0,1127.0L1173.6,1127.0L1173.9,1139.1L1174.1,1157.3L1174.2,1181.6L1174.3,1212.0L1174.5,1248.4L1174.7,1293.9L1174.8,1339.5L1175.0,1385.0L1175.1,1430.5ZM1174.0,1430.5L1174.2,1384.5L1174.3,1338.5L1174.4,1292.5L1174.6,1246.5L1174.8,1209.7L1174.9,1179.1L1175.1,1154.6L1175.2,1136.2L1175.5,1123.9L1179.1,1123.9L1179.3,1136.2L1179.5,1154.6L1179.6,1179.1L1179.8,1209.7L1179.9,1246.5L1180.1,1292.5L1180.2,1338.5L1180.4,1384.5L1180.5,1430.5ZM1179.4,1430.5L1179.6,1385.6L1179.7,1340.8L1179.9,1295.9L1180.0,1251.0L1180.2,1215.1L1180.3,1185.2L1180.5,1161.3L1180.6,1143.4L1180.9,1131.4L1184.5,1131.4L1184.8,1143.4L1184.9,1161.3L1185.1,1185.2L1185.2,1215.1L1185.4,1251.0L1185.5,1295.9L1185.7,1340.8L1185.8,1385.6L1186.0,1430.5ZM1184.9,1430.5L1185.0,1384.7L1185.2,1338.9L1185.3,1293.1L1185.5,1247.3L1185.6,1210.6L1185.8,1180.1L1185.9,1155.6L1186.1,1137.3L1186.3,1125.1L1189.9,1125.1L1190.2,1137.3L1190.3,1155.6L1190.5,1180.1L1190.6,1210.6L1190.8,1247.3L1191.0,1293.1L1191.1,1338.9L1191.2,1384.7L1191.4,1430.5ZM1190.3,1430.5L1190.4,1385.0L1190.6,1339.5L1190.7,1293.9L1190.9,1248.4L1191.1,1212.0L1191.2,1181.6L1191.3,1157.3L1191.5,1139.1L1191.8,1127.0L1195.3,1127.0L1195.6,1139.1L1195.8,1157.3L1195.9,1181.6L1196.1,1212.0L1196.2,1248.4L1196.4,1293.9L1196.5,1339.5L1196.7,1385.0L1196.8,1430.5ZM1195.7,1430.5L1195.9,1384.1L1196.0,1337.8L1196.2,1291.4L1196.3,1245.0L1196.5,1207.9L1196.6,1177.0L1196.8,1152.3L1196.9,1133.8L1197.2,1121.4L1200.8,1121.4L1201.0,1133.8L1201.2,1152.3L1201.3,1177.0L1201.5,1207.9L1201.6,1245.0L1201.8,1291.4L1202.0,1337.8L1202.1,1384.1L1202.2,1430.5ZM1201.2,1430.5L1201.3,1385.1L1201.4,1339.8L1201.6,1294.4L1201.8,1249.1L1201.9,1212.8L1202.1,1182.5L1202.2,1158.3L1202.4,1140.2L1202.6,1128.1L1206.2,1128.1L1206.5,1140.2L1206.6,1158.3L1206.8,1182.5L1206.9,1212.8L1207.1,1249.1L1207.2,1294.4L1207.4,1339.8L1207.5,1385.1L1207.7,1430.5ZM1206.6,1430.5L1206.7,1384.3L1206.9,1338.2L1207.0,1292.0L1207.2,1245.9L1207.3,1209.0L1207.5,1178.2L1207.6,1153.6L1207.8,1135.1L1208.1,1122.8L1211.6,1122.8L1211.9,1135.1L1212.1,1153.6L1212.2,1178.2L1212.4,1209.0L1212.5,1245.9L1212.7,1292.0L1212.8,1338.2L1213.0,1384.3L1213.1,1430.5ZM1212.0,1430.5L1212.2,1384.3L1212.3,1338.2L1212.5,1292.0L1212.6,1245.9L1212.8,1209.0L1212.9,1178.2L1213.1,1153.6L1213.2,1135.1L1213.5,1122.8L1217.1,1122.8L1217.3,1135.1L1217.5,1153.6L1217.6,1178.2L1217.8,1209.0L1217.9,1245.9L1218.1,1292.0L1218.3,1338.2L1218.4,1384.3L1218.5,1430.5ZM1217.5,1430.5L1217.6,1384.9L1217.7,1339.2L1217.9,1293.6L1218.1,1248.0L1218.2,1211.5L1218.4,1181.1L1218.5,1156.7L1218.7,1138.5L1218.9,1126.3L1222.5,1126.3L1222.8,1138.5L1222.9,1156.7L1223.1,1181.1L1223.2,1211.5L1223.4,1248.0L1223.5,1293.6L1223.7,1339.2L1223.8,1384.9L1224.0,1430.5ZM1222.9,1430.5L1223.0,1384.8L1223.2,1339.0L1223.3,1293.3L1223.5,1247.6L1223.6,1211.0L1223.8,1180.5L1223.9,1156.1L1224.1,1137.8L1224.3,1125.6L1227.9,1125.6L1228.2,1137.8L1228.4,1156.1L1228.5,1180.5L1228.6,1211.0L1228.8,1247.6L1229.0,1293.3L1229.1,1339.0L1229.3,1384.8L1229.4,1430.5ZM1228.3,1430.5L1228.5,1385.6L1228.6,1340.6L1228.7,1295.7L1228.9,1250.7L1229.1,1214.8L1229.2,1184.8L1229.4,1160.9L1229.5,1142.9L1229.8,1130.9L1233.4,1130.9L1233.6,1142.9L1233.8,1160.9L1233.9,1184.8L1234.1,1214.8L1234.2,1250.7L1234.4,1295.7L1234.5,1340.6L1234.7,1385.6L1234.8,1430.5ZM1233.7,1430.5L1233.9,1384.1L1234.0,1337.8L1234.2,1291.4L1234.3,1245.0L1234.5,1207.9L1234.6,1177.0L1234.8,1152.3L1234.9,1133.8L1235.2,1121.4L1238.8,1121.4L1239.1,1133.8L1239.2,1152.3L1239.4,1177.0L1239.5,1207.9L1239.7,1245.0L1239.8,1291.4L1240.0,1337.8L1240.1,1384.1L1240.3,1430.5ZM1239.2,1430.5L1239.3,1385.6L1239.5,1340.6L1239.6,1295.7L1239.8,1250.7L1239.9,1214.8L1240.1,1184.8L1240.2,1160.9L1240.4,1142.9L1240.6,1130.9L1244.2,1130.9L1244.5,1142.9L1244.6,1160.9L1244.8,1184.8L1244.9,1214.8L1245.1,1250.7L1245.2,1295.7L1245.4,1340.6L1245.5,1385.6L1245.7,1430.5ZM1244.6,1430.5L1244.7,1385.0L1244.9,1339.5L1245.0,1293.9L1245.2,1248.4L1245.4,1212.0L1245.5,1181.6L1245.6,1157.3L1245.8,1139.1L1246.1,1127.0L1249.6,1127.0L1249.9,1139.1L1250.1,1157.3L1250.2,1181.6L1250.4,1212.0L1250.5,1248.4L1250.7,1293.9L1250.8,1339.5L1251.0,1385.0L1251.1,1430.5ZM1250.0,1430.5L1250.2,1385.2L1250.3,1339.9L1250.5,1294.6L1250.6,1249.4L1250.8,1213.1L1250.9,1182.9L1251.1,1158.8L1251.2,1140.7L1251.5,1128.6L1255.1,1128.6L1255.3,1140.7L1255.5,1158.8L1255.6,1182.9L1255.8,1213.1L1255.9,1249.4L1256.1,1294.6L1256.3,1339.9L1256.4,1385.2L1256.5,1430.5ZM1255.5,1430.5L1255.6,1386.4L1255.8,1342.2L1255.9,1298.1L1256.1,1253.9L1256.2,1218.6L1256.4,1189.2L1256.5,1165.6L1256.7,1148.0L1256.9,1136.2L1260.5,1136.2L1260.8,1148.0L1260.9,1165.6L1261.1,1189.2L1261.2,1218.6L1261.4,1253.9L1261.5,1298.1L1261.7,1342.2L1261.8,1386.4L1262.0,1430.5ZM1260.9,1430.5L1261.0,1388.1L1261.2,1345.6L1261.3,1303.2L1261.5,1260.8L1261.6,1226.8L1261.8,1198.5L1261.9,1175.9L1262.1,1158.9L1262.4,1147.6L1265.9,1147.6L1266.2,1158.9L1266.4,1175.9L1266.5,1198.5L1266.7,1226.8L1266.8,1260.8L1267.0,1303.2L1267.1,1345.6L1267.3,1388.1L1267.4,1430.5ZM1266.3,1430.5L1266.5,1385.7L1266.6,1341.0L1266.8,1296.2L1266.9,1251.5L1267.1,1215.7L1267.2,1185.8L1267.4,1161.9L1267.5,1144.0L1267.8,1132.1L1271.4,1132.1L1271.6,1144.0L1271.8,1161.9L1271.9,1185.8L1272.1,1215.7L1272.2,1251.5L1272.4,1296.2L1272.5,1341.0L1272.7,1385.7L1272.8,1430.5ZM1271.8,1430.5L1271.9,1385.8L1272.0,1341.0L1272.2,1296.3L1272.4,1251.6L1272.5,1215.8L1272.7,1186.0L1272.8,1162.1L1273.0,1144.2L1273.2,1132.3L1276.8,1132.3L1277.1,1144.2L1277.2,1162.1L1277.4,1186.0L1277.5,1215.8L1277.7,1251.6L1277.8,1296.3L1278.0,1341.0L1278.1,1385.8L1278.3,1430.5ZM1277.2,1430.5L1277.3,1385.6L1277.5,1340.8L1277.6,1295.9L1277.8,1251.0L1277.9,1215.1L1278.1,1185.2L1278.2,1161.3L1278.4,1143.4L1278.6,1131.4L1282.2,1131.4L1282.5,1143.4L1282.6,1161.3L1282.8,1185.2L1282.9,1215.1L1283.1,1251.0L1283.3,1295.9L1283.4,1340.8L1283.5,1385.6L1283.7,1430.5ZM1282.6,1430.5L1282.8,1386.6L1282.9,1342.6L1283.1,1298.7L1283.2,1254.8L1283.4,1219.6L1283.5,1190.3L1283.7,1166.9L1283.8,1149.3L1284.1,1137.6L1287.7,1137.6L1287.9,1149.3L1288.1,1166.9L1288.2,1190.3L1288.4,1219.6L1288.5,1254.8L1288.7,1298.7L1288.8,1342.6L1289.0,1386.6L1289.1,1430.5ZM1288.1,1430.5L1288.2,1385.5L1288.3,1340.4L1288.5,1295.4L1288.7,1250.3L1288.8,1214.3L1288.9,1184.3L1289.1,1160.2L1289.2,1142.2L1289.5,1130.2L1293.1,1130.2L1293.4,1142.2L1293.5,1160.2L1293.7,1184.3L1293.8,1214.3L1293.9,1250.3L1294.1,1295.4L1294.3,1340.4L1294.4,1385.5L1294.5,1430.5ZM1293.5,1430.5L1293.6,1385.5L1293.8,1340.4L1293.9,1295.4L1294.1,1250.3L1294.2,1214.3L1294.4,1184.3L1294.5,1160.2L1294.7,1142.2L1294.9,1130.2L1298.5,1130.2L1298.8,1142.2L1298.9,1160.2L1299.1,1184.3L1299.2,1214.3L1299.4,1250.3L1299.5,1295.4L1299.7,1340.4L1299.8,1385.5L1300.0,1430.5ZM1298.9,1430.5L1299.1,1391.6L1299.2,1352.7L1299.3,1313.7L1299.5,1274.8L1299.7,1243.7L1299.8,1217.7L1300.0,1197.0L1300.1,1181.4L1300.4,1171.0L1303.9,1171.0L1304.2,1181.4L1304.4,1197.0L1304.5,1217.7L1304.7,1243.7L1304.8,1274.8L1305.0,1313.7L1305.1,1352.7L1305.3,1391.6L1305.4,1430.5ZM1304.3,1430.5L1304.5,1388.2L1304.6,1345.8L1304.8,1303.5L1304.9,1261.2L1305.1,1227.3L1305.2,1199.1L1305.4,1176.5L1305.5,1159.6L1305.8,1148.3L1309.4,1148.3L1309.6,1159.6L1309.8,1176.5L1309.9,1199.1L1310.1,1227.3L1310.2,1261.2L1310.4,1303.5L1310.6,1345.8L1310.7,1388.2L1310.8,1430.5ZM1309.8,1430.5L1309.9,1386.5L1310.1,1342.6L1310.2,1298.6L1310.4,1254.6L1310.5,1219.5L1310.7,1190.2L1310.8,1166.7L1311.0,1149.1L1311.2,1137.4L1314.8,1137.4L1315.1,1149.1L1315.2,1166.7L1315.4,1190.2L1315.5,1219.5L1315.7,1254.6L1315.8,1298.6L1316.0,1342.6L1316.1,1386.5L1316.3,1430.5ZM1315.2,1430.5L1315.3,1385.5L1315.5,1340.4L1315.6,1295.4L1315.8,1250.3L1316.0,1214.3L1316.1,1184.3L1316.2,1160.2L1316.4,1142.2L1316.7,1130.2L1320.2,1130.2L1320.5,1142.2L1320.7,1160.2L1320.8,1184.3L1320.9,1214.3L1321.1,1250.3L1321.3,1295.4L1321.4,1340.4L1321.6,1385.5L1321.7,1430.5ZM1320.6,1430.5L1320.8,1386.1L1320.9,1341.7L1321.1,1297.3L1321.2,1252.8L1321.4,1217.3L1321.5,1187.7L1321.7,1164.0L1321.8,1146.2L1322.1,1134.4L1325.7,1134.4L1325.9,1146.2L1326.1,1164.0L1326.2,1187.7L1326.4,1217.3L1326.5,1252.8L1326.7,1297.3L1326.8,1341.7L1327.0,1386.1L1327.1,1430.5ZM1326.1,1430.5L1326.2,1386.1L1326.4,1341.7L1326.5,1297.3L1326.7,1252.8L1326.8,1217.3L1327.0,1187.7L1327.1,1164.0L1327.3,1146.2L1327.5,1134.4L1331.1,1134.4L1331.4,1146.2L1331.5,1164.0L1331.7,1187.7L1331.8,1217.3L1332.0,1252.8L1332.1,1297.3L1332.3,1341.7L1332.4,1386.1L1332.5,1430.5ZM1331.5,1430.5L1331.6,1386.1L1331.8,1341.7L1331.9,1297.3L1332.1,1253.0L1332.2,1217.5L1332.4,1187.9L1332.5,1164.2L1332.7,1146.4L1333.0,1134.6L1336.5,1134.6L1336.8,1146.4L1336.9,1164.2L1337.1,1187.9L1337.2,1217.5L1337.4,1253.0L1337.5,1297.3L1337.7,1341.7L1337.8,1386.1L1338.0,1430.5ZM1336.9,1430.5L1337.1,1385.5L1337.2,1340.6L1337.4,1295.6L1337.5,1250.6L1337.7,1214.6L1337.8,1184.7L1338.0,1160.7L1338.1,1142.7L1338.4,1130.7L1342.0,1130.7L1342.2,1142.7L1342.4,1160.7L1342.5,1184.7L1342.7,1214.6L1342.8,1250.6L1343.0,1295.6L1343.1,1340.6L1343.3,1385.5L1343.4,1430.5ZM1342.4,1430.5L1342.5,1385.3L1342.6,1340.0L1342.8,1294.8L1343.0,1249.6L1343.1,1213.4L1343.2,1183.3L1343.4,1159.2L1343.5,1141.1L1343.8,1129.0L1347.4,1129.0L1347.7,1141.1L1347.8,1159.2L1348.0,1183.3L1348.1,1213.4L1348.2,1249.6L1348.4,1294.8L1348.6,1340.0L1348.7,1385.3L1348.8,1430.5ZM1347.8,1430.5L1347.9,1386.2L1348.1,1341.9L1348.2,1297.7L1348.4,1253.4L1348.5,1218.0L1348.7,1188.4L1348.8,1164.8L1349.0,1147.1L1349.2,1135.3L1352.8,1135.3L1353.1,1147.1L1353.2,1164.8L1353.4,1188.4L1353.5,1218.0L1353.7,1253.4L1353.8,1297.7L1354.0,1341.9L1354.1,1386.2L1354.3,1430.5ZM1353.2,1430.5L1353.4,1386.2L1353.5,1342.0L1353.7,1297.8L1353.8,1253.5L1354.0,1218.1L1354.1,1188.6L1354.3,1165.0L1354.4,1147.3L1354.7,1135.5L1358.2,1135.5L1358.5,1147.3L1358.7,1165.0L1358.8,1188.6L1359.0,1218.1L1359.1,1253.5L1359.3,1297.8L1359.4,1342.0L1359.6,1386.2L1359.7,1430.5ZM1358.7,1430.5L1358.8,1385.6L1358.9,1340.7L1359.1,1295.8L1359.3,1250.9L1359.4,1214.9L1359.5,1185.0L1359.7,1161.0L1359.8,1143.1L1360.1,1131.1L1363.7,1131.1L1363.9,1143.1L1364.1,1161.0L1364.2,1185.0L1364.4,1214.9L1364.5,1250.9L1364.7,1295.8L1364.8,1340.7L1365.0,1385.6L1365.1,1430.5ZM1364.1,1430.5L1364.2,1385.8L1364.4,1341.2L1364.5,1296.5L1364.7,1251.8L1364.8,1216.1L1365.0,1186.3L1365.1,1162.5L1365.3,1144.6L1365.5,1132.7L1369.1,1132.7L1369.4,1144.6L1369.5,1162.5L1369.7,1186.3L1369.8,1216.1L1370.0,1251.8L1370.1,1296.5L1370.3,1341.2L1370.4,1385.8L1370.5,1430.5ZM1369.5,1430.5L1369.7,1387.1L1369.8,1343.7L1370.0,1300.4L1370.1,1257.0L1370.3,1222.3L1370.4,1193.4L1370.5,1170.2L1370.7,1152.9L1371.0,1141.3L1374.5,1141.3L1374.8,1152.9L1375.0,1170.2L1375.1,1193.4L1375.2,1222.3L1375.4,1257.0L1375.5,1300.4L1375.7,1343.7L1375.8,1387.1L1376.0,1430.5ZM1375.0,1430.5L1375.1,1387.0L1375.2,1343.4L1375.4,1299.9L1375.5,1256.3L1375.7,1221.5L1375.8,1192.5L1376.0,1169.2L1376.1,1151.8L1376.4,1140.2L1380.0,1140.2L1380.2,1151.8L1380.4,1169.2L1380.5,1192.5L1380.7,1221.5L1380.8,1256.3L1381.0,1299.9L1381.1,1343.4L1381.3,1387.0L1381.4,1430.5ZM1380.4,1430.5L1380.5,1387.0L1380.7,1343.5L1380.8,1300.0L1381.0,1256.6L1381.1,1221.8L1381.3,1192.8L1381.4,1169.6L1381.6,1152.2L1381.8,1140.6L1385.4,1140.6L1385.7,1152.2L1385.8,1169.6L1386.0,1192.8L1386.1,1221.8L1386.2,1256.6L1386.4,1300.0L1386.6,1343.5L1386.7,1387.0L1386.8,1430.5ZM1385.8,1430.5L1386.0,1386.8L1386.1,1343.0L1386.2,1299.3L1386.4,1255.6L1386.6,1220.6L1386.7,1191.5L1386.8,1168.2L1387.0,1150.7L1387.2,1139.0L1390.8,1139.0L1391.1,1150.7L1391.2,1168.2L1391.4,1191.5L1391.5,1220.6L1391.7,1255.6L1391.8,1299.3L1392.0,1343.0L1392.1,1386.8L1392.3,1430.5ZM1391.2,1430.5L1391.4,1387.3L1391.5,1344.1L1391.7,1300.9L1391.8,1257.7L1392.0,1223.1L1392.1,1194.3L1392.3,1171.3L1392.4,1154.0L1392.7,1142.5L1396.3,1142.5L1396.5,1154.0L1396.7,1171.3L1396.8,1194.3L1397.0,1223.1L1397.1,1257.7L1397.3,1300.9L1397.4,1344.1L1397.6,1387.3L1397.7,1430.5ZM1396.7,1430.5L1396.8,1387.6L1397.0,1344.7L1397.1,1301.8L1397.3,1259.0L1397.4,1224.7L1397.6,1196.1L1397.7,1173.2L1397.9,1156.0L1398.1,1144.6L1401.7,1144.6L1401.9,1156.0L1402.1,1173.2L1402.2,1196.1L1402.4,1224.7L1402.5,1259.0L1402.7,1301.8L1402.8,1344.7L1403.0,1387.6L1403.1,1430.5ZM1402.1,1430.5L1402.2,1388.1L1402.4,1345.7L1402.5,1303.3L1402.7,1260.9L1402.8,1227.0L1403.0,1198.7L1403.1,1176.1L1403.3,1159.1L1403.5,1147.8L1407.1,1147.8L1407.4,1159.1L1407.5,1176.1L1407.7,1198.7L1407.8,1227.0L1408.0,1260.9L1408.1,1303.3L1408.3,1345.7L1408.4,1388.1L1408.5,1430.5ZM1407.5,1430.5L1407.7,1388.3L1407.8,1346.2L1408.0,1304.0L1408.1,1261.8L1408.3,1228.1L1408.4,1200.0L1408.6,1177.5L1408.7,1160.6L1409.0,1149.4L1412.5,1149.4L1412.8,1160.6L1413.0,1177.5L1413.1,1200.0L1413.2,1228.1L1413.4,1261.8L1413.6,1304.0L1413.7,1346.2L1413.8,1388.3L1414.0,1430.5ZM1413.0,1430.5L1413.1,1392.4L1413.3,1354.3L1413.4,1316.2L1413.6,1278.1L1413.7,1247.6L1413.8,1222.2L1414.0,1201.9L1414.1,1186.7L1414.4,1176.5L1418.0,1176.5L1418.2,1186.7L1418.4,1201.9L1418.5,1222.2L1418.7,1247.6L1418.8,1278.1L1419.0,1316.2L1419.1,1354.3L1419.3,1392.4L1419.4,1430.5ZM1418.4,1430.5L1418.5,1386.8L1418.7,1343.2L1418.8,1299.5L1419.0,1255.9L1419.1,1221.0L1419.3,1191.9L1419.4,1168.6L1419.6,1151.1L1419.8,1139.5L1423.4,1139.5L1423.7,1151.1L1423.8,1168.6L1424.0,1191.9L1424.1,1221.0L1424.2,1255.9L1424.4,1299.5L1424.6,1343.2L1424.7,1386.8L1424.8,1430.5ZM1423.8,1430.5L1424.0,1387.0L1424.1,1343.5L1424.3,1300.0L1424.4,1256.4L1424.6,1221.6L1424.7,1192.6L1424.9,1169.4L1425.0,1152.0L1425.3,1140.4L1428.8,1140.4L1429.1,1152.0L1429.2,1169.4L1429.4,1192.6L1429.5,1221.6L1429.7,1256.4L1429.8,1300.0L1430.0,1343.5L1430.1,1387.0L1430.3,1430.5ZM1429.3,1430.5L1429.4,1387.6L1429.5,1344.8L1429.7,1301.9L1429.9,1259.1L1430.0,1224.8L1430.1,1196.2L1430.3,1173.4L1430.4,1156.2L1430.7,1144.8L1434.3,1144.8L1434.5,1156.2L1434.7,1173.4L1434.8,1196.2L1435.0,1224.8L1435.1,1259.1L1435.3,1301.9L1435.4,1344.8L1435.6,1387.6L1435.7,1430.5ZM1434.7,1430.5L1434.8,1386.6L1435.0,1342.6L1435.1,1298.7L1435.3,1254.8L1435.4,1219.6L1435.6,1190.3L1435.7,1166.9L1435.9,1149.3L1436.1,1137.6L1439.7,1137.6L1440.0,1149.3L1440.1,1166.9L1440.2,1190.3L1440.4,1219.6L1440.5,1254.8L1440.7,1298.7L1440.8,1342.6L1441.0,1386.6L1441.1,1430.5ZM1440.1,1430.5L1440.3,1386.6L1440.4,1342.7L1440.6,1298.8L1440.7,1254.9L1440.9,1219.8L1441.0,1190.5L1441.1,1167.1L1441.3,1149.5L1441.5,1137.8L1445.1,1137.8L1445.4,1149.5L1445.5,1167.1L1445.7,1190.5L1445.8,1219.8L1446.0,1254.9L1446.1,1298.8L1446.3,1342.7L1446.4,1386.6L1446.5,1430.5ZM1445.6,1430.5L1445.7,1386.2L1445.8,1341.9L1446.0,1297.7L1446.1,1253.4L1446.3,1218.0L1446.4,1188.4L1446.6,1164.8L1446.7,1147.1L1447.0,1135.3L1450.6,1135.3L1450.8,1147.1L1451.0,1164.8L1451.1,1188.4L1451.2,1218.0L1451.4,1253.4L1451.6,1297.7L1451.7,1341.9L1451.8,1386.2L1452.0,1430.5ZM1451.0,1430.5L1451.1,1387.9L1451.3,1345.3L1451.4,1302.7L1451.6,1260.0L1451.7,1225.9L1451.9,1197.5L1452.0,1174.8L1452.2,1157.8L1452.4,1146.4L1456.0,1146.4L1456.2,1157.8L1456.4,1174.8L1456.5,1197.5L1456.7,1225.9L1456.8,1260.0L1457.0,1302.7L1457.1,1345.3L1457.3,1387.9L1457.4,1430.5ZM1456.4,1430.5L1456.6,1387.3L1456.7,1344.1L1456.8,1300.9L1457.0,1257.7L1457.2,1223.1L1457.3,1194.3L1457.4,1171.3L1457.6,1154.0L1457.8,1142.5L1461.4,1142.5L1461.7,1154.0L1461.8,1171.3L1462.0,1194.3L1462.1,1223.1L1462.3,1257.7L1462.4,1300.9L1462.6,1344.1L1462.7,1387.3L1462.8,1430.5ZM1461.9,1430.5L1462.0,1386.8L1462.1,1343.0L1462.3,1299.3L1462.4,1255.6L1462.6,1220.6L1462.7,1191.5L1462.9,1168.2L1463.0,1150.7L1463.3,1139.0L1466.8,1139.0L1467.1,1150.7L1467.3,1168.2L1467.4,1191.5L1467.5,1220.6L1467.7,1255.6L1467.8,1299.3L1468.0,1343.0L1468.1,1386.8L1468.3,1430.5ZM1467.3,1430.5L1467.4,1387.4L1467.6,1344.2L1467.7,1301.1L1467.9,1257.9L1468.0,1223.4L1468.2,1194.7L1468.3,1171.7L1468.4,1154.4L1468.7,1142.9L1472.3,1142.9L1472.5,1154.4L1472.7,1171.7L1472.8,1194.7L1473.0,1223.4L1473.1,1257.9L1473.3,1301.1L1473.4,1344.2L1473.6,1387.4L1473.7,1430.5ZM1472.7,1430.5L1472.9,1387.9L1473.0,1345.2L1473.1,1302.6L1473.3,1259.9L1473.4,1225.8L1473.6,1197.4L1473.7,1174.6L1473.9,1157.6L1474.1,1146.2L1477.7,1146.2L1478.0,1157.6L1478.1,1174.6L1478.3,1197.4L1478.4,1225.8L1478.5,1259.9L1478.7,1302.6L1478.8,1345.2L1479.0,1387.9L1479.1,1430.5ZM1478.2,1430.5L1478.3,1386.5L1478.4,1342.5L1478.6,1298.5L1478.7,1254.5L1478.9,1219.3L1479.0,1189.9L1479.2,1166.4L1479.3,1148.8L1479.6,1137.1L1483.1,1137.1L1483.4,1148.8L1483.5,1166.4L1483.7,1189.9L1483.8,1219.3L1484.0,1254.5L1484.1,1298.5L1484.3,1342.5L1484.4,1386.5L1484.5,1430.5ZM1483.6,1430.5L1483.7,1387.6L1483.9,1344.8L1484.0,1301.9L1484.2,1259.1L1484.3,1224.8L1484.4,1196.2L1484.6,1173.4L1484.7,1156.2L1485.0,1144.8L1488.6,1144.8L1488.8,1156.2L1489.0,1173.4L1489.1,1196.2L1489.3,1224.8L1489.4,1259.1L1489.6,1301.9L1489.7,1344.8L1489.8,1387.6L1490.0,1430.5ZM1489.0,1430.5L1489.2,1388.9L1489.3,1347.3L1489.4,1305.7L1489.6,1264.1L1489.7,1230.8L1489.9,1203.0L1490.0,1180.8L1490.2,1164.2L1490.4,1153.1L1494.0,1153.1L1494.3,1164.2L1494.4,1180.8L1494.5,1203.0L1494.7,1230.8L1494.8,1264.1L1495.0,1305.7L1495.1,1347.3L1495.3,1388.9L1495.4,1430.5ZM1494.5,1430.5L1494.6,1388.8L1494.7,1347.0L1494.9,1305.3L1495.0,1263.5L1495.2,1230.1L1495.3,1202.3L1495.4,1180.0L1495.6,1163.3L1495.8,1152.2L1499.4,1152.2L1499.7,1163.3L1499.8,1180.0L1500.0,1202.3L1500.1,1230.1L1500.3,1263.5L1500.4,1305.3L1500.6,1347.0L1500.7,1388.8L1500.8,1430.5ZM1499.9,1430.5L1500.0,1388.0L1500.2,1345.5L1500.3,1303.0L1500.5,1260.5L1500.6,1226.5L1500.7,1198.1L1500.9,1175.4L1501.0,1158.4L1501.3,1147.1L1504.9,1147.1L1505.1,1158.4L1505.3,1175.4L1505.4,1198.1L1505.5,1226.5L1505.7,1260.5L1505.8,1303.0L1506.0,1345.5L1506.1,1388.0L1506.3,1430.5ZM1505.3,1430.5L1505.5,1388.9L1505.6,1347.3L1505.7,1305.7L1505.9,1264.1L1506.0,1230.8L1506.2,1203.0L1506.3,1180.8L1506.5,1164.2L1506.7,1153.1L1510.3,1153.1L1510.5,1164.2L1510.7,1180.8L1510.8,1203.0L1511.0,1230.8L1511.1,1264.1L1511.3,1305.7L1511.4,1347.3L1511.5,1388.9L1511.7,1430.5ZM1510.8,1430.5L1510.9,1387.0L1511.0,1343.5L1511.2,1300.0L1511.3,1256.6L1511.5,1221.8L1511.6,1192.8L1511.7,1169.6L1511.9,1152.2L1512.1,1140.6L1515.7,1140.6L1516.0,1152.2L1516.1,1169.6L1516.3,1192.8L1516.4,1221.8L1516.5,1256.6L1516.7,1300.0L1516.8,1343.5L1517.0,1387.0L1517.1,1430.5ZM1516.2,1430.5L1516.3,1389.0L1516.5,1347.4L1516.6,1305.9L1516.8,1264.4L1516.9,1231.1L1517.0,1203.4L1517.2,1181.3L1517.3,1164.7L1517.6,1153.6L1521.1,1153.6L1521.4,1164.7L1521.5,1181.3L1521.7,1203.4L1521.8,1231.1L1522.0,1264.4L1522.1,1305.9L1522.3,1347.4L1522.4,1389.0L1522.5,1430.5ZM1521.6,1430.5L1521.7,1388.3L1521.9,1346.2L1522.0,1304.0L1522.2,1261.8L1522.3,1228.1L1522.5,1200.0L1522.6,1177.5L1522.7,1160.6L1523.0,1149.4L1526.6,1149.4L1526.8,1160.6L1527.0,1177.5L1527.1,1200.0L1527.3,1228.1L1527.4,1261.8L1527.6,1304.0L1527.7,1346.2L1527.8,1388.3L1528.0,1430.5ZM1527.0,1430.5L1527.2,1393.3L1527.3,1356.0L1527.5,1318.8L1527.6,1281.6L1527.8,1251.8L1527.9,1227.0L1528.0,1207.1L1528.2,1192.2L1528.4,1182.3L1532.0,1182.3L1532.3,1192.2L1532.4,1207.1L1532.5,1227.0L1532.7,1251.8L1532.8,1281.6L1533.0,1318.8L1533.1,1356.0L1533.3,1393.3L1533.4,1430.5ZM1532.5,1430.5L1532.6,1389.0L1532.7,1347.5L1532.9,1306.0L1533.0,1264.5L1533.2,1231.3L1533.3,1203.6L1533.5,1181.5L1533.6,1164.9L1533.9,1153.8L1537.4,1153.8L1537.7,1164.9L1537.8,1181.5L1538.0,1203.6L1538.1,1231.3L1538.3,1264.5L1538.4,1306.0L1538.6,1347.5L1538.7,1389.0L1538.8,1430.5ZM1537.9,1430.5L1538.0,1389.3L1538.2,1348.1L1538.3,1306.8L1538.5,1265.6L1538.6,1232.6L1538.8,1205.2L1538.9,1183.2L1539.0,1166.7L1539.3,1155.7L1542.9,1155.7L1543.1,1166.7L1543.3,1183.2L1543.4,1205.2L1543.5,1232.6L1543.7,1265.6L1543.8,1306.8L1544.0,1348.1L1544.1,1389.3L1544.2,1430.5ZM1543.3,1430.5L1543.5,1389.5L1543.6,1348.5L1543.8,1307.5L1543.9,1266.5L1544.0,1233.7L1544.2,1206.3L1544.3,1184.4L1544.5,1168.0L1544.7,1157.1L1548.3,1157.1L1548.5,1168.0L1548.7,1184.4L1548.8,1206.3L1549.0,1233.7L1549.1,1266.5L1549.3,1307.5L1549.4,1348.5L1549.5,1389.5L1549.7,1430.5ZM1548.8,1430.5L1548.9,1389.4L1549.0,1348.3L1549.2,1307.2L1549.3,1266.0L1549.5,1233.1L1549.6,1205.7L1549.8,1183.8L1549.9,1167.4L1550.1,1156.4L1553.7,1156.4L1554.0,1167.4L1554.1,1183.8L1554.3,1205.7L1554.4,1233.1L1554.5,1266.0L1554.7,1307.2L1554.8,1348.3L1555.0,1389.4L1555.1,1430.5ZM1554.2,1430.5L1554.3,1389.9L1554.5,1349.3L1554.6,1308.7L1554.8,1268.1L1554.9,1235.6L1555.0,1208.5L1555.2,1186.9L1555.3,1170.6L1555.6,1159.8L1559.2,1159.8L1559.4,1170.6L1559.6,1186.9L1559.7,1208.5L1559.8,1235.6L1560.0,1268.1L1560.1,1308.7L1560.3,1349.3L1560.4,1389.9L1560.5,1430.5ZM1559.6,1430.5L1559.8,1390.3L1559.9,1350.1L1560.0,1309.9L1560.2,1269.8L1560.3,1237.6L1560.5,1210.8L1560.6,1189.4L1560.8,1173.3L1561.0,1162.6L1564.6,1162.6L1564.8,1173.3L1565.0,1189.4L1565.1,1210.8L1565.3,1237.6L1565.4,1269.8L1565.6,1309.9L1565.7,1350.1L1565.8,1390.3L1566.0,1430.5ZM1565.1,1430.5L1565.2,1390.6L1565.3,1350.8L1565.5,1310.9L1565.6,1271.0L1565.8,1239.1L1565.9,1212.5L1566.0,1191.3L1566.2,1175.3L1566.4,1164.7L1570.0,1164.7L1570.3,1175.3L1570.4,1191.3L1570.5,1212.5L1570.7,1239.1L1570.8,1271.0L1571.0,1310.9L1571.1,1350.8L1571.3,1390.6L1571.4,1430.5ZM1570.5,1430.5L1570.6,1391.5L1570.8,1352.5L1570.9,1313.5L1571.1,1274.5L1571.2,1243.3L1571.3,1217.3L1571.5,1196.5L1571.6,1180.9L1571.9,1170.5L1575.4,1170.5L1575.7,1180.9L1575.8,1196.5L1576.0,1217.3L1576.1,1243.3L1576.3,1274.5L1576.4,1313.5L1576.5,1352.5L1576.7,1391.5L1576.8,1430.5ZM1575.9,1430.5L1576.1,1391.3L1576.2,1352.1L1576.3,1312.9L1576.5,1273.7L1576.6,1242.3L1576.8,1216.2L1576.9,1195.2L1577.1,1179.6L1577.3,1169.1L1580.9,1169.1L1581.1,1179.6L1581.3,1195.2L1581.4,1216.2L1581.5,1242.3L1581.7,1273.7L1581.8,1312.9L1582.0,1352.1L1582.1,1391.3L1582.2,1430.5ZM1581.4,1430.5L1581.5,1398.3L1581.6,1366.1L1581.8,1333.8L1581.9,1301.6L1582.1,1275.8L1582.2,1254.4L1582.3,1237.2L1582.5,1224.3L1582.7,1215.7L1586.3,1215.7L1586.6,1224.3L1586.7,1237.2L1586.8,1254.4L1587.0,1275.8L1587.1,1301.6L1587.3,1333.8L1587.4,1366.1L1587.5,1398.3L1587.7,1430.5ZM1586.8,1430.5L1586.9,1392.4L1587.1,1354.3L1587.2,1316.2L1587.4,1278.1L1587.5,1247.6L1587.6,1222.2L1587.8,1201.9L1587.9,1186.7L1588.2,1176.5L1591.7,1176.5L1592.0,1186.7L1592.1,1201.9L1592.3,1222.2L1592.4,1247.6L1592.5,1278.1L1592.7,1316.2L1592.8,1354.3L1593.0,1392.4L1593.1,1430.5ZM1592.2,1430.5L1592.4,1391.3L1592.5,1352.1L1592.6,1313.0L1592.8,1273.8L1592.9,1242.4L1593.1,1216.3L1593.2,1195.4L1593.3,1179.7L1593.6,1169.3L1597.2,1169.3L1597.4,1179.7L1597.6,1195.4L1597.7,1216.3L1597.8,1242.4L1598.0,1273.8L1598.1,1313.0L1598.3,1352.1L1598.4,1391.3L1598.5,1430.5ZM1597.7,1430.5L1597.8,1392.7L1597.9,1354.9L1598.1,1317.1L1598.2,1279.4L1598.4,1249.1L1598.5,1223.9L1598.6,1203.8L1598.8,1188.7L1599.0,1178.6L1602.6,1178.6L1602.8,1188.7L1603.0,1203.8L1603.1,1223.9L1603.3,1249.1L1603.4,1279.4L1603.6,1317.1L1603.7,1354.9L1603.8,1392.7L1604.0,1430.5ZM1603.1,1430.5L1603.2,1396.3L1603.4,1362.2L1603.5,1328.0L1603.7,1293.8L1603.8,1266.5L1603.9,1243.7L1604.1,1225.5L1604.2,1211.8L1604.4,1202.7L1608.0,1202.7L1608.3,1211.8L1608.4,1225.5L1608.6,1243.7L1608.7,1266.5L1608.8,1293.8L1609.0,1328.0L1609.1,1362.2L1609.3,1396.3L1609.4,1430.5ZM1608.5,1430.5L1608.7,1399.2L1608.8,1368.0L1608.9,1336.7L1609.1,1305.5L1609.2,1280.5L1609.4,1259.6L1609.5,1242.9L1609.6,1230.4L1609.9,1222.1L1613.5,1222.1L1613.7,1230.4L1613.8,1242.9L1614.0,1259.6L1614.1,1280.5L1614.3,1305.5L1614.4,1336.7L1614.5,1368.0L1614.7,1399.2L1614.8,1430.5ZM1614.0,1430.5L1614.1,1404.5L1614.2,1378.5L1614.4,1352.5L1614.5,1326.5L1614.7,1305.7L1614.8,1288.3L1614.9,1274.4L1615.1,1264.0L1615.3,1257.1L1618.9,1257.1L1619.1,1264.0L1619.3,1274.4L1619.4,1288.3L1619.5,1305.7L1619.7,1326.5L1619.8,1352.5L1620.0,1378.5L1620.1,1404.5L1620.2,1430.5ZM1619.4,1430.5L1619.5,1407.4L1619.7,1384.4L1619.8,1361.3L1619.9,1338.3L1620.1,1319.8L1620.2,1304.5L1620.4,1292.2L1620.5,1282.9L1620.7,1276.8L1624.3,1276.8L1624.6,1282.9L1624.7,1292.2L1624.8,1304.5L1625.0,1319.8L1625.1,1338.3L1625.3,1361.3L1625.4,1384.4L1625.5,1407.4L1625.7,1430.5ZM1624.8,1430.5L1625.0,1398.0L1625.1,1365.4L1625.2,1332.9L1625.4,1300.4L1625.5,1274.3L1625.6,1252.6L1625.8,1235.3L1625.9,1222.3L1626.2,1213.6L1629.7,1213.6L1630.0,1222.3L1630.1,1235.3L1630.3,1252.6L1630.4,1274.3L1630.5,1300.4L1630.7,1332.9L1630.8,1365.4L1631.0,1398.0L1631.1,1430.5ZM1630.3,1430.5L1630.4,1393.0L1630.5,1355.6L1630.7,1318.1L1630.8,1280.6L1630.9,1250.6L1631.1,1225.7L1631.2,1205.7L1631.4,1190.7L1631.6,1180.7L1635.2,1180.7L1635.4,1190.7L1635.6,1205.7L1635.7,1225.7L1635.8,1250.6L1636.0,1280.6L1636.1,1318.1L1636.3,1355.6L1636.4,1393.0L1636.5,1430.5ZM1635.7,1430.5L1635.8,1394.1L1636.0,1357.7L1636.1,1321.3L1636.2,1284.9L1636.4,1255.8L1636.5,1231.6L1636.6,1212.2L1636.8,1197.6L1637.0,1187.9L1640.6,1187.9L1640.9,1197.6L1641.0,1212.2L1641.1,1231.6L1641.3,1255.8L1641.4,1284.9L1641.5,1321.3L1641.7,1357.7L1641.8,1394.1L1641.9,1430.5ZM1641.1,1430.5L1641.3,1393.7L1641.4,1356.9L1641.5,1320.2L1641.7,1283.4L1641.8,1254.0L1641.9,1229.4L1642.1,1209.8L1642.2,1195.1L1642.5,1185.3L1646.0,1185.3L1646.3,1195.1L1646.4,1209.8L1646.6,1229.4L1646.7,1254.0L1646.8,1283.4L1647.0,1320.2L1647.1,1356.9L1647.2,1393.7L1647.4,1430.5ZM1646.6,1430.5L1646.7,1403.0L1646.8,1375.5L1647.0,1348.0L1647.1,1320.5L1647.2,1298.5L1647.4,1280.1L1647.5,1265.4L1647.6,1254.4L1647.9,1247.1L1651.5,1247.1L1651.7,1254.4L1651.9,1265.4L1652.0,1280.1L1652.1,1298.5L1652.3,1320.5L1652.4,1348.0L1652.5,1375.5L1652.7,1403.0L1652.8,1430.5ZM1652.0,1430.5L1652.1,1401.7L1652.2,1372.8L1652.4,1344.0L1652.5,1315.2L1652.7,1292.1L1652.8,1272.9L1652.9,1257.5L1653.1,1246.0L1653.3,1238.3L1656.9,1238.3L1657.1,1246.0L1657.3,1257.5L1657.4,1272.9L1657.5,1292.1L1657.7,1315.2L1657.8,1344.0L1658.0,1372.8L1658.1,1401.7L1658.2,1430.5ZM1657.4,1430.5L1657.6,1393.0L1657.7,1355.5L1657.8,1318.0L1658.0,1280.5L1658.1,1250.5L1658.2,1225.5L1658.4,1205.5L1658.5,1190.5L1658.8,1180.5L1662.3,1180.5L1662.6,1190.5L1662.7,1205.5L1662.8,1225.5L1663.0,1250.5L1663.1,1280.5L1663.3,1318.0L1663.4,1355.5L1663.5,1393.0L1663.7,1430.5ZM1662.9,1430.5L1663.0,1393.3L1663.1,1356.1L1663.2,1318.9L1663.4,1281.7L1663.5,1251.9L1663.7,1227.1L1663.8,1207.3L1663.9,1192.4L1664.2,1182.5L1667.8,1182.5L1668.0,1192.4L1668.1,1207.3L1668.3,1227.1L1668.4,1251.9L1668.5,1281.7L1668.7,1318.9L1668.8,1356.1L1669.0,1393.3L1669.1,1430.5ZM1668.3,1430.5L1668.4,1397.8L1668.5,1365.0L1668.7,1332.3L1668.8,1299.5L1669.0,1273.3L1669.1,1251.5L1669.2,1234.0L1669.4,1220.9L1669.6,1212.2L1673.2,1212.2L1673.4,1220.9L1673.6,1234.0L1673.7,1251.5L1673.8,1273.3L1674.0,1299.5L1674.1,1332.3L1674.3,1365.0L1674.4,1397.8L1674.5,1430.5ZM1673.7,1430.5L1673.8,1393.4L1674.0,1356.3L1674.1,1319.2L1674.3,1282.1L1674.4,1252.4L1674.5,1227.7L1674.7,1207.9L1674.8,1193.1L1675.0,1183.2L1678.6,1183.2L1678.9,1193.1L1679.0,1207.9L1679.1,1227.7L1679.3,1252.4L1679.4,1282.1L1679.5,1319.2L1679.7,1356.3L1679.8,1393.4L1679.9,1430.5ZM1679.2,1430.5L1679.3,1394.3L1679.4,1358.2L1679.5,1322.0L1679.7,1285.9L1679.8,1257.0L1680.0,1232.9L1680.1,1213.6L1680.2,1199.1L1680.5,1189.5L1684.0,1189.5L1684.3,1199.1L1684.4,1213.6L1684.6,1232.9L1684.7,1257.0L1684.8,1285.9L1685.0,1322.0L1685.1,1358.2L1685.2,1394.3L1685.4,1430.5ZM1684.6,1430.5L1684.7,1405.9L1684.8,1381.3L1685.0,1356.7L1685.1,1332.0L1685.3,1312.3L1685.4,1295.9L1685.5,1282.8L1685.7,1273.0L1685.9,1266.4L1689.5,1266.4L1689.7,1273.0L1689.9,1282.8L1690.0,1295.9L1690.1,1312.3L1690.3,1332.0L1690.4,1356.7L1690.5,1381.3L1690.7,1405.9L1690.8,1430.5ZM1690.0,1430.5L1690.1,1394.5L1690.3,1358.4L1690.4,1322.4L1690.6,1286.3L1690.7,1257.5L1690.8,1233.5L1691.0,1214.2L1691.1,1199.8L1691.3,1190.2L1694.9,1190.2L1695.1,1199.8L1695.3,1214.2L1695.4,1233.5L1695.6,1257.5L1695.7,1286.3L1695.8,1322.4L1696.0,1358.4L1696.1,1394.5L1696.2,1430.5ZM1695.4,1430.5L1695.6,1419.3L1695.7,1408.2L1695.8,1397.0L1696.0,1385.8L1696.1,1376.9L1696.3,1369.4L1696.4,1363.5L1696.5,1359.0L1696.8,1356.0L1700.3,1356.0L1700.6,1359.0L1700.7,1363.5L1700.8,1369.4L1701.0,1376.9L1701.1,1385.8L1701.3,1397.0L1701.4,1408.2L1701.5,1419.3L1701.7,1430.5ZM1700.9,1430.5L1701.0,1394.2L1701.1,1358.0L1701.3,1321.7L1701.4,1285.5L1701.6,1256.5L1701.7,1232.3L1701.8,1213.0L1702.0,1198.5L1702.2,1188.8L1705.8,1188.8L1706.0,1198.5L1706.1,1213.0L1706.3,1232.3L1706.4,1256.5L1706.5,1285.5L1706.7,1321.7L1706.8,1358.0L1707.0,1394.2L1707.1,1430.5ZM1706.3,1430.5L1706.4,1399.5L1706.6,1368.5L1706.7,1337.5L1706.8,1306.5L1707.0,1281.7L1707.1,1261.0L1707.2,1244.5L1707.4,1232.1L1707.6,1223.8L1711.2,1223.8L1711.4,1232.1L1711.6,1244.5L1711.7,1261.0L1711.8,1281.7L1712.0,1306.5L1712.1,1337.5L1712.3,1368.5L1712.4,1399.5L1712.5,1430.5ZM1711.7,1430.5L1711.9,1396.0L1712.0,1361.5L1712.1,1327.0L1712.3,1292.4L1712.4,1264.8L1712.5,1241.8L1712.7,1223.4L1712.8,1209.6L1713.0,1200.4L1716.6,1200.4L1716.9,1209.6L1717.0,1223.4L1717.1,1241.8L1717.3,1264.8L1717.4,1292.4L1717.5,1327.0L1717.7,1361.5L1717.8,1396.0L1717.9,1430.5ZM1717.2,1430.5L1717.3,1396.0L1717.4,1361.5L1717.6,1327.0L1717.7,1292.4L1717.8,1264.8L1718.0,1241.8L1718.1,1223.4L1718.2,1209.6L1718.5,1200.4L1722.1,1200.4L1722.3,1209.6L1722.4,1223.4L1722.6,1241.8L1722.7,1264.8L1722.8,1292.4L1723.0,1327.0L1723.1,1361.5L1723.2,1396.0L1723.4,1430.5ZM1722.6,1430.5L1722.7,1395.2L1722.9,1359.9L1723.0,1324.7L1723.1,1289.4L1723.3,1261.2L1723.4,1237.6L1723.5,1218.8L1723.7,1204.7L1723.9,1195.3L1727.5,1195.3L1727.7,1204.7L1727.9,1218.8L1728.0,1237.6L1728.1,1261.2L1728.3,1289.4L1728.4,1324.7L1728.5,1359.9L1728.7,1395.2L1728.8,1430.5ZM1728.0,1430.5L1728.2,1396.0L1728.3,1361.5L1728.4,1327.0L1728.6,1292.4L1728.7,1264.8L1728.8,1241.8L1729.0,1223.4L1729.1,1209.6L1729.3,1200.4L1732.9,1200.4L1733.2,1209.6L1733.3,1223.4L1733.4,1241.8L1733.6,1264.8L1733.7,1292.4L1733.8,1327.0L1734.0,1361.5L1734.1,1396.0L1734.2,1430.5ZM1733.5,1430.5L1733.6,1397.4L1733.7,1364.4L1733.9,1331.3L1734.0,1298.3L1734.1,1271.8L1734.3,1249.8L1734.4,1232.1L1734.5,1218.9L1734.8,1210.1L1738.3,1210.1L1738.6,1218.9L1738.7,1232.1L1738.9,1249.8L1739.0,1271.8L1739.1,1298.3L1739.3,1331.3L1739.4,1364.4L1739.5,1397.4L1739.6,1430.5ZM1738.9,1430.5L1739.0,1397.2L1739.2,1363.9L1739.3,1330.6L1739.4,1297.3L1739.6,1270.7L1739.7,1248.5L1739.8,1230.7L1740.0,1217.4L1740.2,1208.5L1743.8,1208.5L1744.0,1217.4L1744.2,1230.7L1744.3,1248.5L1744.4,1270.7L1744.5,1297.3L1744.7,1330.6L1744.8,1363.9L1744.9,1397.2L1745.1,1430.5ZM1744.3,1430.5L1744.5,1396.6L1744.6,1362.7L1744.7,1328.8L1744.9,1294.9L1745.0,1267.8L1745.1,1245.2L1745.3,1227.1L1745.4,1213.5L1745.6,1204.5L1749.2,1204.5L1749.4,1213.5L1749.6,1227.1L1749.7,1245.2L1749.8,1267.8L1750.0,1294.9L1750.1,1328.8L1750.2,1362.7L1750.4,1396.6L1750.5,1430.5ZM1749.8,1430.5L1749.9,1397.0L1750.0,1363.5L1750.2,1330.1L1750.3,1296.6L1750.4,1269.8L1750.6,1247.5L1750.7,1229.6L1750.8,1216.2L1751.1,1207.3L1754.6,1207.3L1754.9,1216.2L1755.0,1229.6L1755.1,1247.5L1755.3,1269.8L1755.4,1296.6L1755.5,1330.1L1755.7,1363.5L1755.8,1397.0L1755.9,1430.5ZM1755.2,1430.5L1755.3,1396.4L1755.5,1362.2L1755.6,1328.1L1755.7,1293.9L1755.9,1266.6L1756.0,1243.9L1756.1,1225.7L1756.3,1212.0L1756.5,1202.9L1760.1,1202.9L1760.3,1212.0L1760.4,1225.7L1760.6,1243.9L1760.7,1266.6L1760.8,1293.9L1761.0,1328.1L1761.1,1362.2L1761.2,1396.4L1761.4,1430.5ZM1760.6,1430.5L1760.8,1396.8L1760.9,1363.1L1761.0,1329.4L1761.2,1295.7L1761.3,1268.8L1761.4,1246.3L1761.6,1228.4L1761.7,1214.9L1761.9,1205.9L1765.5,1205.9L1765.7,1214.9L1765.9,1228.4L1766.0,1246.3L1766.1,1268.8L1766.3,1295.7L1766.4,1329.4L1766.5,1363.1L1766.7,1396.8L1766.8,1430.5ZM1766.1,1430.5L1766.2,1396.8L1766.3,1363.1L1766.4,1329.3L1766.6,1295.6L1766.7,1268.6L1766.9,1246.2L1767.0,1228.2L1767.1,1214.7L1767.3,1205.7L1770.9,1205.7L1771.2,1214.7L1771.3,1228.2L1771.4,1246.2L1771.6,1268.6L1771.7,1295.6L1771.8,1329.3L1772.0,1363.1L1772.1,1396.8L1772.2,1430.5ZM1771.5,1430.5L1771.6,1397.2L1771.7,1364.0L1771.9,1330.7L1772.0,1297.4L1772.2,1270.8L1772.3,1248.6L1772.4,1230.9L1772.5,1217.6L1772.8,1208.7L1776.4,1208.7L1776.6,1217.6L1776.7,1230.9L1776.9,1248.6L1777.0,1270.8L1777.1,1297.4L1777.3,1330.7L1777.4,1364.0L1777.5,1397.2L1777.6,1430.5ZM1776.9,1430.5L1777.1,1397.8L1777.2,1365.1L1777.3,1332.4L1777.5,1299.6L1777.6,1273.5L1777.7,1251.7L1777.8,1234.2L1778.0,1221.1L1778.2,1212.4L1781.8,1212.4L1782.0,1221.1L1782.2,1234.2L1782.3,1251.7L1782.4,1273.5L1782.5,1299.6L1782.7,1332.4L1782.8,1365.1L1782.9,1397.8L1783.1,1430.5ZM1782.4,1430.5L1782.5,1397.5L1782.6,1364.4L1782.7,1331.4L1782.9,1298.4L1783.0,1272.0L1783.1,1249.9L1783.3,1232.3L1783.4,1219.1L1783.6,1210.3L1787.2,1210.3L1787.5,1219.1L1787.6,1232.3L1787.7,1249.9L1787.8,1272.0L1788.0,1298.4L1788.1,1331.4L1788.2,1364.4L1788.4,1397.5L1788.5,1430.5ZM1787.8,1430.5L1787.9,1400.2L1788.0,1369.9L1788.2,1339.6L1788.3,1309.2L1788.4,1285.0L1788.6,1264.8L1788.7,1248.6L1788.8,1236.5L1789.1,1228.4L1792.6,1228.4L1792.9,1236.5L1793.0,1248.6L1793.1,1264.8L1793.3,1285.0L1793.4,1309.2L1793.5,1339.6L1793.7,1369.9L1793.8,1400.2L1793.9,1430.5ZM1793.2,1430.5L1793.4,1411.9L1793.5,1393.3L1793.6,1374.7L1793.7,1356.0L1793.9,1341.1L1794.0,1328.7L1794.1,1318.8L1794.3,1311.4L1794.5,1306.4L1798.1,1306.4L1798.3,1311.4L1798.4,1318.8L1798.6,1328.7L1798.7,1341.1L1798.8,1356.0L1799.0,1374.7L1799.1,1393.3L1799.2,1411.9L1799.4,1430.5ZM1798.7,1430.5L1798.8,1413.2L1798.9,1395.9L1799.0,1378.6L1799.2,1361.3L1799.3,1347.5L1799.4,1336.0L1799.6,1326.7L1799.7,1319.8L1799.9,1315.2L1803.5,1315.2L1803.7,1319.8L1803.9,1326.7L1804.0,1336.0L1804.1,1347.5L1804.3,1361.3L1804.4,1378.6L1804.5,1395.9L1804.7,1413.2L1804.8,1430.5ZM1804.1,1430.5L1804.2,1419.2L1804.3,1408.0L1804.5,1396.8L1804.6,1385.5L1804.7,1376.5L1804.9,1369.0L1805.0,1363.0L1805.1,1358.5L1805.4,1355.5L1808.9,1355.5L1809.2,1358.5L1809.3,1363.0L1809.4,1369.0L1809.6,1376.5L1809.7,1385.5L1809.8,1396.8L1810.0,1408.0L1810.1,1419.2L1810.2,1430.5ZM1809.5,1430.5L1809.6,1404.0L1809.8,1377.6L1809.9,1351.1L1810.0,1324.7L1810.2,1303.5L1810.3,1285.9L1810.4,1271.7L1810.6,1261.2L1810.8,1254.1L1814.4,1254.1L1814.6,1261.2L1814.7,1271.7L1814.9,1285.9L1815.0,1303.5L1815.1,1324.7L1815.3,1351.1L1815.4,1377.6L1815.5,1404.0L1815.6,1430.5ZM1815.0,1430.5L1815.1,1401.8L1815.2,1373.1L1815.3,1344.5L1815.5,1315.8L1815.6,1292.8L1815.7,1273.7L1815.9,1258.4L1816.0,1246.9L1816.2,1239.3L1819.8,1239.3L1820.0,1246.9L1820.2,1258.4L1820.3,1273.7L1820.4,1292.8L1820.5,1315.8L1820.7,1344.5L1820.8,1373.1L1820.9,1401.8L1821.1,1430.5ZM1820.4,1430.5L1820.5,1406.6L1820.6,1382.7L1820.8,1358.7L1820.9,1334.8L1821.0,1315.7L1821.2,1299.7L1821.3,1287.0L1821.4,1277.4L1821.6,1271.0L1825.2,1271.0L1825.5,1277.4L1825.6,1287.0L1825.7,1299.7L1825.8,1315.7L1826.0,1334.8L1826.1,1358.7L1826.2,1382.7L1826.4,1406.6L1826.5,1430.5ZM1825.8,1430.5L1825.9,1401.5L1826.1,1372.5L1826.2,1343.5L1826.3,1314.5L1826.5,1291.3L1826.6,1272.0L1826.7,1256.5L1826.9,1244.9L1827.1,1237.2L1830.7,1237.2L1830.9,1244.9L1831.0,1256.5L1831.1,1272.0L1831.3,1291.3L1831.4,1314.5L1831.5,1343.5L1831.7,1372.5L1831.8,1401.5L1831.9,1430.5ZM1831.3,1430.5L1831.4,1400.5L1831.5,1370.5L1831.6,1340.5L1831.8,1310.5L1831.9,1286.5L1832.0,1266.5L1832.1,1250.5L1832.3,1238.5L1832.5,1230.5L1836.1,1230.5L1836.3,1238.5L1836.5,1250.5L1836.6,1266.5L1836.7,1286.5L1836.8,1310.5L1837.0,1340.5L1837.1,1370.5L1837.2,1400.5L1837.3,1430.5ZM1836.7,1430.5L1836.8,1404.6L1836.9,1378.7L1837.1,1352.8L1837.2,1326.9L1837.3,1306.2L1837.5,1288.9L1837.6,1275.1L1837.7,1264.7L1837.9,1257.8L1841.5,1257.8L1841.7,1264.7L1841.9,1275.1L1842.0,1288.9L1842.1,1306.2L1842.3,1326.9L1842.4,1352.8L1842.5,1378.7L1842.7,1404.6L1842.8,1430.5ZM1842.1,1430.5L1842.2,1401.5L1842.4,1372.5L1842.5,1343.5L1842.6,1314.5L1842.8,1291.3L1842.9,1272.0L1843.0,1256.5L1843.1,1244.9L1843.4,1237.2L1846.9,1237.2L1847.2,1244.9L1847.3,1256.5L1847.4,1272.0L1847.6,1291.3L1847.7,1314.5L1847.8,1343.5L1848.0,1372.5L1848.1,1401.5L1848.2,1430.5ZM1847.5,1430.5L1847.7,1401.3L1847.8,1372.2L1847.9,1343.0L1848.1,1313.8L1848.2,1290.5L1848.3,1271.0L1848.4,1255.5L1848.6,1243.8L1848.8,1236.0L1852.4,1236.0L1852.6,1243.8L1852.7,1255.5L1852.9,1271.0L1853.0,1290.5L1853.1,1313.8L1853.3,1343.0L1853.4,1372.2L1853.5,1401.3L1853.6,1430.5ZM1853.0,1430.5L1853.1,1401.0L1853.2,1371.5L1853.4,1341.9L1853.5,1312.4L1853.6,1288.8L1853.7,1269.1L1853.9,1253.4L1854.0,1241.6L1854.2,1233.7L1857.8,1233.7L1858.0,1241.6L1858.2,1253.4L1858.3,1269.1L1858.4,1288.8L1858.5,1312.4L1858.7,1341.9L1858.8,1371.5L1858.9,1401.0L1859.1,1430.5ZM1858.4,1430.5L1858.5,1401.8L1858.7,1373.2L1858.8,1344.5L1858.9,1315.9L1859.1,1293.0L1859.2,1273.9L1859.3,1258.6L1859.4,1247.1L1859.7,1239.5L1863.2,1239.5L1863.5,1247.1L1863.6,1258.6L1863.7,1273.9L1863.8,1293.0L1864.0,1315.9L1864.1,1344.5L1864.2,1373.2L1864.4,1401.8L1864.5,1430.5ZM1863.8,1430.5L1864.0,1401.6L1864.1,1372.7L1864.2,1343.8L1864.4,1314.9L1864.5,1291.8L1864.6,1272.6L1864.7,1257.2L1864.9,1245.6L1865.1,1237.9L1868.7,1237.9L1868.9,1245.6L1869.0,1257.2L1869.2,1272.6L1869.3,1291.8L1869.4,1314.9L1869.5,1343.8L1869.7,1372.7L1869.8,1401.6L1869.9,1430.5ZM1869.3,1430.5L1869.4,1410.7L1869.5,1391.0L1869.6,1371.2L1869.8,1351.5L1869.9,1335.7L1870.0,1322.5L1870.2,1312.0L1870.3,1304.1L1870.5,1298.8L1874.1,1298.8L1874.3,1304.1L1874.5,1312.0L1874.6,1322.5L1874.7,1335.7L1874.8,1351.5L1875.0,1371.2L1875.1,1391.0L1875.2,1410.7L1875.3,1430.5ZM1874.7,1430.5L1874.8,1412.5L1874.9,1394.5L1875.1,1376.5L1875.2,1358.6L1875.3,1344.2L1875.5,1332.2L1875.6,1322.6L1875.7,1315.4L1875.9,1310.6L1879.5,1310.6L1879.8,1315.4L1879.9,1322.6L1880.0,1332.2L1880.1,1344.2L1880.3,1358.6L1880.4,1376.5L1880.5,1394.5L1880.7,1412.5L1880.8,1430.5ZM1880.1,1430.5L1880.3,1409.6L1880.4,1388.7L1880.5,1367.8L1880.6,1346.9L1880.8,1330.1L1880.9,1316.2L1881.0,1305.0L1881.2,1296.7L1881.4,1291.1L1885.0,1291.1L1885.2,1296.7L1885.3,1305.0L1885.4,1316.2L1885.6,1330.1L1885.7,1346.9L1885.8,1367.8L1886.0,1388.7L1886.1,1409.6L1886.2,1430.5ZM1885.6,1430.5L1885.7,1411.6L1885.8,1392.7L1885.9,1373.8L1886.1,1355.0L1886.2,1339.9L1886.3,1327.3L1886.5,1317.2L1886.6,1309.6L1886.8,1304.6L1890.4,1304.6L1890.6,1309.6L1890.7,1317.2L1890.9,1327.3L1891.0,1339.9L1891.1,1355.0L1891.3,1373.8L1891.4,1392.7L1891.5,1411.6L1891.6,1430.5ZM1891.0,1430.5L1891.1,1411.1L1891.2,1391.7L1891.4,1372.3L1891.5,1352.9L1891.6,1337.3L1891.8,1324.4L1891.9,1314.0L1892.0,1306.3L1892.2,1301.1L1895.8,1301.1L1896.0,1306.3L1896.2,1314.0L1896.3,1324.4L1896.4,1337.3L1896.6,1352.9L1896.7,1372.3L1896.8,1391.7L1896.9,1411.1L1897.1,1430.5ZM1896.4,1430.5L1896.6,1408.1L1896.7,1385.7L1896.8,1363.3L1896.9,1340.9L1897.1,1323.0L1897.2,1308.1L1897.3,1296.1L1897.4,1287.2L1897.7,1281.2L1901.2,1281.2L1901.5,1287.2L1901.6,1296.1L1901.7,1308.1L1901.9,1323.0L1902.0,1340.9L1902.1,1363.3L1902.2,1385.7L1902.4,1408.1L1902.5,1430.5ZM1901.9,1430.5L1902.0,1411.9L1902.1,1393.2L1902.2,1374.6L1902.4,1355.9L1902.5,1341.0L1902.6,1328.6L1902.7,1318.6L1902.9,1311.2L1903.1,1306.2L1906.7,1306.2L1906.9,1311.2L1907.0,1318.6L1907.2,1328.6L1907.3,1341.0L1907.4,1355.9L1907.5,1374.6L1907.7,1393.2L1907.8,1411.9L1907.9,1430.5ZM1907.3,1430.5L1907.4,1403.8L1907.5,1377.1L1907.7,1350.4L1907.8,1323.7L1907.9,1302.3L1908.1,1284.5L1908.2,1270.3L1908.3,1259.6L1908.5,1252.5L1912.1,1252.5L1912.3,1259.6L1912.5,1270.3L1912.6,1284.5L1912.7,1302.3L1912.8,1323.7L1913.0,1350.4L1913.1,1377.1L1913.2,1403.8L1913.3,1430.5ZM1912.7,1430.5L1912.8,1403.5L1913.0,1376.5L1913.1,1349.5L1913.2,1322.4L1913.4,1300.8L1913.5,1282.8L1913.6,1268.4L1913.7,1257.6L1914.0,1250.4L1917.5,1250.4L1917.8,1257.6L1917.9,1268.4L1918.0,1282.8L1918.1,1300.8L1918.3,1322.4L1918.4,1349.5L1918.5,1376.5L1918.7,1403.5L1918.8,1430.5ZM1918.2,1430.5L1918.3,1407.2L1918.4,1383.9L1918.5,1360.6L1918.7,1337.3L1918.8,1318.7L1918.9,1303.2L1919.0,1290.7L1919.2,1281.4L1919.4,1275.2L1923.0,1275.2L1923.2,1281.4L1923.3,1290.7L1923.4,1303.2L1923.6,1318.7L1923.7,1337.3L1923.8,1360.6L1924.0,1383.9L1924.1,1407.2L1924.2,1430.5ZM1923.6,1430.5L1923.7,1414.7L1923.8,1398.8L1924.0,1383.0L1924.1,1367.2L1924.2,1354.5L1924.3,1344.0L1924.5,1335.5L1924.6,1329.2L1924.8,1325.0L1928.4,1325.0L1928.6,1329.2L1928.8,1335.5L1928.9,1344.0L1929.0,1354.5L1929.1,1367.2L1929.3,1383.0L1929.4,1398.8L1929.5,1414.7L1929.6,1430.5ZM1929.0,1430.5L1929.1,1420.9L1929.3,1411.3L1929.4,1401.7L1929.5,1392.2L1929.7,1384.5L1929.8,1378.1L1929.9,1373.0L1930.0,1369.2L1930.2,1366.6L1933.8,1366.6L1934.1,1369.2L1934.2,1373.0L1934.3,1378.1L1934.4,1384.5L1934.6,1392.2L1934.7,1401.7L1934.8,1411.3L1934.9,1420.9L1935.1,1430.5ZM1934.5,1430.5L1934.6,1405.6L1934.7,1380.8L1934.8,1355.9L1935.0,1331.0L1935.1,1311.1L1935.2,1294.5L1935.3,1281.3L1935.5,1271.3L1935.7,1264.7L1939.3,1264.7L1939.5,1271.3L1939.6,1281.3L1939.7,1294.5L1939.9,1311.1L1940.0,1331.0L1940.1,1355.9L1940.2,1380.8L1940.4,1405.6L1940.5,1430.5ZM1939.9,1430.5L1940.0,1408.1L1940.1,1385.8L1940.2,1363.4L1940.4,1341.0L1940.5,1323.1L1940.6,1308.2L1940.8,1296.3L1940.9,1287.4L1941.1,1281.4L1944.7,1281.4L1944.9,1287.4L1945.0,1296.3L1945.2,1308.2L1945.3,1323.1L1945.4,1341.0L1945.6,1363.4L1945.7,1385.8L1945.8,1408.1L1945.9,1430.5ZM1945.3,1430.5L1945.4,1406.0L1945.6,1381.5L1945.7,1357.0L1945.8,1332.5L1945.9,1312.9L1946.1,1296.5L1946.2,1283.4L1946.3,1273.6L1946.5,1267.1L1950.1,1267.1L1950.3,1273.6L1950.5,1283.4L1950.6,1296.5L1950.7,1312.9L1950.8,1332.5L1951.0,1357.0L1951.1,1381.5L1951.2,1406.0L1951.3,1430.5Z"/><path d="M718.2,1429.5v-42M723.9,1429.5v-33M729.3,1429.5v-23M734.5,1429.5v-25M740.4,1429.5v-26M745.7,1429.5v-50M751.0,1429.5v-51M756.7,1429.5v-31M761.7,1429.5v-31M772.8,1429.5v-41M778.2,1429.5v-24M783.4,1429.5v-42M788.9,1429.5v-40M794.3,1429.5v-46M805.4,1429.5v-38M821.9,1429.5v-26M827.2,1429.5v-27M832.2,1429.5v-42M843.6,1429.5v-31M854.2,1429.5v-36M870.6,1429.5v-24M897.6,1429.5v-42M903.0,1429.5v-27M908.2,1429.5v-45M913.8,1429.5v-34M924.8,1429.5v-38M946.5,1429.5v-33M962.6,1429.5v-29M968.2,1429.5v-40M973.4,1429.5v-35M979.1,1429.5v-51M990.0,1429.5v-42M995.6,1429.5v-45M1011.6,1429.5v-25M1022.3,1429.5v-28M1027.9,1429.5v-24M1033.2,1429.5v-25M1038.5,1429.5v-48M1044.0,1429.5v-30M1049.6,1429.5v-26M1066.0,1429.5v-25M1071.3,1429.5v-30M1082.0,1429.5v-51M1087.5,1429.5v-38M1093.1,1429.5v-51M1109.3,1429.5v-27M1120.4,1429.5v-32M1125.9,1429.5v-52M1152.9,1429.5v-33M1158.0,1429.5v-30M1163.8,1429.5v-51M1169.4,1429.5v-52M1179.8,1429.5v-29M1185.3,1429.5v-41M1201.8,1429.5v-46M1207.2,1429.5v-49M1223.2,1429.5v-46M1229.1,1429.5v-51M1234.2,1429.5v-50M1244.9,1429.5v-27M1261.6,1429.5v-51M1272.3,1429.5v-26M1278.0,1429.5v-41M1283.4,1429.5v-35M1299.3,1429.5v-31M1304.9,1429.5v-30M1310.1,1429.5v-49M1315.7,1429.5v-40M1326.9,1429.5v-37M1332.1,1429.5v-23M1337.3,1429.5v-22M1348.3,1429.5v-44M1353.7,1429.5v-38M1359.4,1429.5v-25M1364.5,1429.5v-30M1375.5,1429.5v-45M1386.4,1429.5v-37M1391.9,1429.5v-36M1397.2,1429.5v-50M1419.0,1429.5v-50M1429.6,1429.5v-35M1435.1,1429.5v-24M1457.1,1429.5v-42M1462.6,1429.5v-51M1468.1,1429.5v-34M1473.5,1429.5v-47M1478.6,1429.5v-37M1483.9,1429.5v-32M1495.0,1429.5v-35M1500.3,1429.5v-41M1505.5,1429.5v-52M1521.9,1429.5v-23M1532.7,1429.5v-35M1549.0,1429.5v-50M1554.8,1429.5v-25M1560.2,1429.5v-35M1565.8,1429.5v-41M1576.6,1429.5v-24M1587.2,1429.5v-39M1597.9,1429.5v-38M1603.3,1429.5v-27M1608.8,1429.5v-31M1614.6,1429.5v-31M1619.6,1429.5v-32M1625.1,1429.5v-22M1635.9,1429.5v-36M1647.2,1429.5v-35M1652.6,1429.5v-34" stroke="#fff" stroke-opacity="0.24" stroke-width="0.7" fill="none"/></g>
<text x="200.6" y="1130.0" text-anchor="end" font-size="24" letter-spacing="0.3">1000 W/m^2</text>
<text x="200.6" y="1284.0" text-anchor="end" font-size="24" letter-spacing="0.3">500 W/m^2</text>
<text x="200.6" y="1439.0" text-anchor="end" font-size="24" letter-spacing="0.3">0 W/m^2</text>
<text x="203.0" y="1473" text-anchor="middle" font-size="24">Jan 2020</text>
<text x="527.3" y="1473" text-anchor="middle" font-size="24">Mar 2020</text>
<text x="859.3" y="1473" text-anchor="middle" font-size="24">May 2020</text>
<text x="1191.6" y="1473" text-anchor="middle" font-size="24">Jul 2020</text>
<text x="1527.6" y="1473" text-anchor="middle" font-size="24">Sep 2020</text>
<text x="1859.2" y="1473" text-anchor="middle" font-size="24">Nov 2020</text>
<text x="644.6" y="1087.2" font-size="32.4" word-spacing="1.1" textLength="1103" lengthAdjust="spacing" fill="#33466a">measured mean 5min global horizontal irradiance in W/m^2 (demo)</text>
</svg>
</body></html>
